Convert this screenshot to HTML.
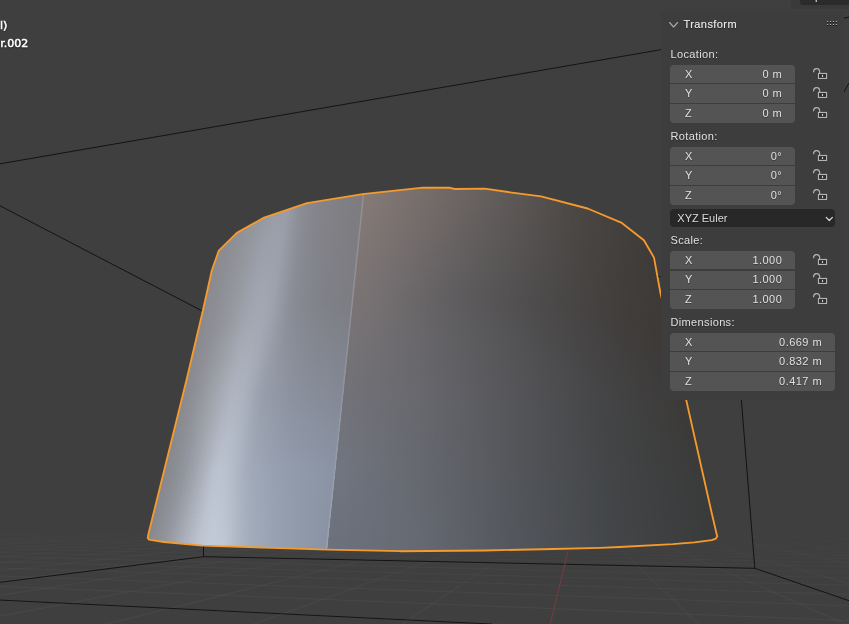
<!DOCTYPE html><html><head><meta charset="utf-8"><title>Blender</title><style>
html,body{margin:0;padding:0;background:#3f3f3f;}
body{width:849px;height:624px;overflow:hidden;position:relative;font-family:"Liberation Sans",sans-serif;font-size:11px;color:#e0e0e0;letter-spacing:0.35px;}
.abs{position:absolute;}
#panel{left:661px;top:10.8px;width:182.6px;height:388.9px;background:#3d3d3d;border-radius:4px;}
.lbl{position:absolute;white-space:nowrap;line-height:12px;text-shadow:0 1px 1px rgba(0,0,0,.35);}
.fld{position:absolute;background:#545454;left:670px;}
.val{position:absolute;white-space:nowrap;line-height:12px;text-align:right;}
#ov{position:absolute;left:0;top:0;white-space:nowrap;font-weight:bold;color:#fff;text-shadow:0 0 2px #000,0 1px 2px #000;}
</style></head><body>
<svg width="849" height="624" viewBox="0 0 849 624" style="position:absolute;left:0;top:0">
<rect width="849" height="624" fill="#3f3f3f"/>
<defs><linearGradient id="gfade" gradientUnits="userSpaceOnUse" x1="0" y1="524" x2="0" y2="600"><stop offset="0" stop-color="#fff" stop-opacity="0"/><stop offset="1" stop-color="#fff" stop-opacity="0.043"/></linearGradient></defs>
<g fill="none" stroke-width="1">
<path d="M578.0,507.5L-1941.9,647.3" stroke="url(#gfade)"/>
<path d="M578.0,507.5L-1764.3,647.3" stroke="url(#gfade)"/>
<path d="M578.0,507.5L-1586.7,647.3" stroke="url(#gfade)"/>
<path d="M578.0,507.5L-1409.1,647.3" stroke="url(#gfade)"/>
<path d="M578.0,507.5L-1231.5,647.3" stroke="url(#gfade)"/>
<path d="M578.0,507.5L-1053.9,647.3" stroke="url(#gfade)"/>
<path d="M578.0,507.5L-876.3,647.3" stroke="url(#gfade)"/>
<path d="M578.0,507.5L-698.7,647.3" stroke="url(#gfade)"/>
<path d="M578.0,507.5L-521.1,647.3" stroke="url(#gfade)"/>
<path d="M578.0,507.5L-343.5,647.3" stroke="url(#gfade)"/>
<path d="M578.0,507.5L-165.9,647.3" stroke="url(#gfade)"/>
<path d="M578.0,507.5L11.7,647.3" stroke="url(#gfade)"/>
<path d="M578.0,507.5L189.3,647.3" stroke="url(#gfade)"/>
<path d="M578.0,507.5L366.9,647.3" stroke="url(#gfade)"/>
<path d="M578.0,507.5L722.1,647.3" stroke="url(#gfade)"/>
<path d="M578.0,507.5L899.7,647.3" stroke="url(#gfade)"/>
<path d="M578.0,507.5L1077.3,647.3" stroke="url(#gfade)"/>
<path d="M578.0,507.5L1254.9,647.3" stroke="url(#gfade)"/>
<path d="M578.0,507.5L1432.5,647.3" stroke="url(#gfade)"/>
<path d="M578.0,507.5L1610.1,647.3" stroke="url(#gfade)"/>
<path d="M578.0,507.5L1787.7,647.3" stroke="url(#gfade)"/>
<path d="M578.0,507.5L1965.3,647.3" stroke="url(#gfade)"/>
<path d="M578.0,507.5L2142.9,647.3" stroke="url(#gfade)"/>
<path d="M578.0,507.5L2320.5,647.3" stroke="url(#gfade)"/>
<path d="M578.0,507.5L2498.1,647.3" stroke="url(#gfade)"/>
<path d="M578.0,507.5L2675.7,647.3" stroke="url(#gfade)"/>
<path d="M578.0,507.5L2853.3,647.3" stroke="url(#gfade)"/>
<path d="M578.0,507.5L3030.9,647.3" stroke="url(#gfade)"/>
<path d="M0,600.4L849,640.8" stroke="#fff" stroke-opacity="0.043"/>
<path d="M0,586.3L849,620.6" stroke="#fff" stroke-opacity="0.043"/>
<path d="M0,576.0L849,605.8" stroke="#fff" stroke-opacity="0.040"/>
<path d="M0,568.0L849,594.4" stroke="#fff" stroke-opacity="0.035"/>
<path d="M0,561.7L849,585.3" stroke="#fff" stroke-opacity="0.030"/>
<path d="M0,556.6L849,578.0" stroke="#fff" stroke-opacity="0.026"/>
<path d="M0,552.4L849,571.9" stroke="#fff" stroke-opacity="0.023"/>
<path d="M0,548.8L849,566.8" stroke="#fff" stroke-opacity="0.021"/>
<path d="M0,545.8L849,562.4" stroke="#fff" stroke-opacity="0.019"/>
<path d="M0,543.2L849,558.7" stroke="#fff" stroke-opacity="0.017"/>
<path d="M0,540.9L849,555.4" stroke="#fff" stroke-opacity="0.015"/>
<path d="M0,538.9L849,552.5" stroke="#fff" stroke-opacity="0.014"/>
<path d="M0,537.1L849,550.0" stroke="#fff" stroke-opacity="0.012"/>
<path d="M0,535.5L849,547.7" stroke="#fff" stroke-opacity="0.011"/>
<path d="M0,534.1L849,545.6" stroke="#fff" stroke-opacity="0.010"/>
<path d="M0,532.8L849,543.8" stroke="#fff" stroke-opacity="0.009"/>
<path d="M0,531.6L849,542.1" stroke="#fff" stroke-opacity="0.008"/>
</g>
<g stroke="#0e0e0e" stroke-width="0.9" fill="none">
<path d="M0,163.8 L849,17.2"/>
<path d="M0,205.8 L210,315"/>
<path d="M0,582.3 L203.5,556.7 L754.8,568.3 L849,600.7"/>
<path d="M203.5,545 L203.5,556.7"/>
<path d="M0,600.1 L492,624.05"/>
<path d="M741.2,398 L754.8,568.3"/>
<path d="M843,93.5 L849,83"/>
<path d="M656.5,275.6 L660.5,276.8"/>
</g>
<path d="M568,551 L550.3,624" stroke="#7a3a40" stroke-width="1" fill="none"/>
<defs>
<linearGradient id="L0" gradientUnits="userSpaceOnUse" x1="219.8" y1="249.6" x2="148.5" y2="539.2"><stop offset="0" stop-color="#8b8b91"/><stop offset="0.3" stop-color="#8a8a90"/><stop offset="0.55" stop-color="#898a90"/><stop offset="0.78" stop-color="#86888e"/><stop offset="1" stop-color="#87898f"/></linearGradient>
<linearGradient id="L1" gradientUnits="userSpaceOnUse" x1="221.4" y1="248.0" x2="150.5" y2="539.5"><stop offset="0" stop-color="#8b8b91"/><stop offset="0.3" stop-color="#8a8a90"/><stop offset="0.55" stop-color="#8a8b91"/><stop offset="0.78" stop-color="#87898f"/><stop offset="1" stop-color="#888a90"/></linearGradient>
<linearGradient id="L2" gradientUnits="userSpaceOnUse" x1="223.0" y1="246.5" x2="152.5" y2="539.9"><stop offset="0" stop-color="#8b8b91"/><stop offset="0.3" stop-color="#8a8b91"/><stop offset="0.55" stop-color="#8a8c92"/><stop offset="0.78" stop-color="#878a90"/><stop offset="1" stop-color="#898b91"/></linearGradient>
<linearGradient id="L3" gradientUnits="userSpaceOnUse" x1="224.6" y1="244.9" x2="154.5" y2="540.3"><stop offset="0" stop-color="#8c8c92"/><stop offset="0.3" stop-color="#8b8b91"/><stop offset="0.55" stop-color="#8b8d93"/><stop offset="0.78" stop-color="#888b91"/><stop offset="1" stop-color="#8b8d93"/></linearGradient>
<linearGradient id="L4" gradientUnits="userSpaceOnUse" x1="226.2" y1="243.3" x2="156.4" y2="540.6"><stop offset="0" stop-color="#8c8d93"/><stop offset="0.3" stop-color="#8c8c92"/><stop offset="0.55" stop-color="#8c8e94"/><stop offset="0.78" stop-color="#8a8c92"/><stop offset="1" stop-color="#8c8e94"/></linearGradient>
<linearGradient id="L5" gradientUnits="userSpaceOnUse" x1="227.8" y1="241.7" x2="158.4" y2="541.0"><stop offset="0" stop-color="#8c8d93"/><stop offset="0.3" stop-color="#8c8d93"/><stop offset="0.55" stop-color="#8e8f95"/><stop offset="0.78" stop-color="#8b8d94"/><stop offset="1" stop-color="#8e9096"/></linearGradient>
<linearGradient id="L6" gradientUnits="userSpaceOnUse" x1="229.4" y1="240.1" x2="160.4" y2="541.4"><stop offset="0" stop-color="#8d8e94"/><stop offset="0.3" stop-color="#8d8e94"/><stop offset="0.55" stop-color="#8f9097"/><stop offset="0.78" stop-color="#8c8f95"/><stop offset="1" stop-color="#8f9198"/></linearGradient>
<linearGradient id="L7" gradientUnits="userSpaceOnUse" x1="231.0" y1="238.6" x2="162.4" y2="541.7"><stop offset="0" stop-color="#8d8e94"/><stop offset="0.3" stop-color="#8d8e95"/><stop offset="0.55" stop-color="#909298"/><stop offset="0.78" stop-color="#8e9097"/><stop offset="1" stop-color="#91939a"/></linearGradient>
<linearGradient id="L8" gradientUnits="userSpaceOnUse" x1="232.6" y1="237.0" x2="164.4" y2="542.1"><stop offset="0" stop-color="#8e8f95"/><stop offset="0.3" stop-color="#8e8f95"/><stop offset="0.55" stop-color="#91939a"/><stop offset="0.78" stop-color="#8f9299"/><stop offset="1" stop-color="#93959c"/></linearGradient>
<linearGradient id="L9" gradientUnits="userSpaceOnUse" x1="234.3" y1="235.4" x2="166.4" y2="542.3"><stop offset="0" stop-color="#8e8f95"/><stop offset="0.3" stop-color="#8f9096"/><stop offset="0.55" stop-color="#93959c"/><stop offset="0.78" stop-color="#91949c"/><stop offset="1" stop-color="#95979f"/></linearGradient>
<linearGradient id="L10" gradientUnits="userSpaceOnUse" x1="235.9" y1="233.8" x2="168.4" y2="542.5"><stop offset="0" stop-color="#8f9096"/><stop offset="0.3" stop-color="#909197"/><stop offset="0.55" stop-color="#94979d"/><stop offset="0.78" stop-color="#93959e"/><stop offset="1" stop-color="#979aa2"/></linearGradient>
<linearGradient id="L11" gradientUnits="userSpaceOnUse" x1="237.5" y1="232.5" x2="170.4" y2="542.6"><stop offset="0" stop-color="#8f9097"/><stop offset="0.3" stop-color="#919298"/><stop offset="0.55" stop-color="#96989f"/><stop offset="0.78" stop-color="#9497a0"/><stop offset="1" stop-color="#999ca4"/></linearGradient>
<linearGradient id="L12" gradientUnits="userSpaceOnUse" x1="239.1" y1="231.6" x2="172.4" y2="542.8"><stop offset="0" stop-color="#909197"/><stop offset="0.3" stop-color="#919399"/><stop offset="0.55" stop-color="#979aa1"/><stop offset="0.78" stop-color="#969aa3"/><stop offset="1" stop-color="#9c9fa7"/></linearGradient>
<linearGradient id="L13" gradientUnits="userSpaceOnUse" x1="240.7" y1="230.7" x2="174.3" y2="543.0"><stop offset="0" stop-color="#909198"/><stop offset="0.3" stop-color="#92949a"/><stop offset="0.55" stop-color="#999ca3"/><stop offset="0.78" stop-color="#989ca5"/><stop offset="1" stop-color="#9ea2ab"/></linearGradient>
<linearGradient id="L14" gradientUnits="userSpaceOnUse" x1="242.3" y1="229.8" x2="176.3" y2="543.2"><stop offset="0" stop-color="#909299"/><stop offset="0.3" stop-color="#93959b"/><stop offset="0.55" stop-color="#9a9ea5"/><stop offset="0.78" stop-color="#9b9fa8"/><stop offset="1" stop-color="#a1a5ae"/></linearGradient>
<linearGradient id="L15" gradientUnits="userSpaceOnUse" x1="243.9" y1="228.9" x2="178.3" y2="543.4"><stop offset="0" stop-color="#919299"/><stop offset="0.3" stop-color="#94969d"/><stop offset="0.55" stop-color="#9ca0a7"/><stop offset="0.78" stop-color="#9da1ab"/><stop offset="1" stop-color="#a4a8b1"/></linearGradient>
<linearGradient id="L16" gradientUnits="userSpaceOnUse" x1="245.5" y1="228.0" x2="180.3" y2="543.6"><stop offset="0" stop-color="#91939a"/><stop offset="0.3" stop-color="#95979e"/><stop offset="0.55" stop-color="#9ea1aa"/><stop offset="0.78" stop-color="#9fa4ae"/><stop offset="1" stop-color="#a6abb5"/></linearGradient>
<linearGradient id="L17" gradientUnits="userSpaceOnUse" x1="247.1" y1="227.1" x2="182.3" y2="543.8"><stop offset="0" stop-color="#92939b"/><stop offset="0.3" stop-color="#96989f"/><stop offset="0.55" stop-color="#9fa3ac"/><stop offset="0.78" stop-color="#a2a7b0"/><stop offset="1" stop-color="#a9aeb8"/></linearGradient>
<linearGradient id="L18" gradientUnits="userSpaceOnUse" x1="248.7" y1="226.2" x2="184.3" y2="544.0"><stop offset="0" stop-color="#92949b"/><stop offset="0.3" stop-color="#9799a0"/><stop offset="0.55" stop-color="#a1a5ae"/><stop offset="0.78" stop-color="#a5aab4"/><stop offset="1" stop-color="#acb1bb"/></linearGradient>
<linearGradient id="L19" gradientUnits="userSpaceOnUse" x1="250.3" y1="225.3" x2="186.3" y2="544.2"><stop offset="0" stop-color="#93949c"/><stop offset="0.3" stop-color="#989aa1"/><stop offset="0.55" stop-color="#a2a7b0"/><stop offset="0.78" stop-color="#a7adb7"/><stop offset="1" stop-color="#aeb4be"/></linearGradient>
<linearGradient id="L20" gradientUnits="userSpaceOnUse" x1="251.9" y1="224.4" x2="188.3" y2="544.4"><stop offset="0" stop-color="#93959d"/><stop offset="0.3" stop-color="#999ba3"/><stop offset="0.55" stop-color="#a4a9b2"/><stop offset="0.78" stop-color="#aab0ba"/><stop offset="1" stop-color="#b1b7c2"/></linearGradient>
<linearGradient id="L21" gradientUnits="userSpaceOnUse" x1="253.5" y1="223.5" x2="190.3" y2="544.6"><stop offset="0" stop-color="#94969d"/><stop offset="0.3" stop-color="#9a9ca4"/><stop offset="0.55" stop-color="#a5aab4"/><stop offset="0.78" stop-color="#adb3be"/><stop offset="1" stop-color="#b3bac5"/></linearGradient>
<linearGradient id="L22" gradientUnits="userSpaceOnUse" x1="255.1" y1="222.6" x2="192.2" y2="544.8"><stop offset="0" stop-color="#94969e"/><stop offset="0.3" stop-color="#9b9da6"/><stop offset="0.55" stop-color="#a7acb6"/><stop offset="0.78" stop-color="#b0b6c1"/><stop offset="1" stop-color="#b6bdc8"/></linearGradient>
<linearGradient id="L23" gradientUnits="userSpaceOnUse" x1="256.7" y1="221.7" x2="194.2" y2="544.9"><stop offset="0" stop-color="#95979f"/><stop offset="0.3" stop-color="#9c9fa7"/><stop offset="0.55" stop-color="#a8aeb8"/><stop offset="0.78" stop-color="#b2b9c5"/><stop offset="1" stop-color="#b8bfcb"/></linearGradient>
<linearGradient id="L24" gradientUnits="userSpaceOnUse" x1="258.3" y1="220.8" x2="196.2" y2="545.1"><stop offset="0" stop-color="#9597a0"/><stop offset="0.3" stop-color="#9da0a9"/><stop offset="0.55" stop-color="#aaafba"/><stop offset="0.78" stop-color="#b5bcc8"/><stop offset="1" stop-color="#bac2ce"/></linearGradient>
<linearGradient id="L25" gradientUnits="userSpaceOnUse" x1="259.9" y1="219.9" x2="198.2" y2="545.3"><stop offset="0" stop-color="#9698a1"/><stop offset="0.3" stop-color="#9da1aa"/><stop offset="0.55" stop-color="#abb1bc"/><stop offset="0.78" stop-color="#b7bfcb"/><stop offset="1" stop-color="#bcc4d0"/></linearGradient>
<linearGradient id="L26" gradientUnits="userSpaceOnUse" x1="261.5" y1="219.0" x2="200.2" y2="545.5"><stop offset="0" stop-color="#9699a2"/><stop offset="0.3" stop-color="#9ea2ac"/><stop offset="0.55" stop-color="#acb2bd"/><stop offset="0.78" stop-color="#b9c1cd"/><stop offset="1" stop-color="#bdc6d1"/></linearGradient>
<linearGradient id="L27" gradientUnits="userSpaceOnUse" x1="263.2" y1="218.1" x2="202.2" y2="545.7"><stop offset="0" stop-color="#9799a3"/><stop offset="0.3" stop-color="#9fa3ad"/><stop offset="0.55" stop-color="#adb3bf"/><stop offset="0.78" stop-color="#bac2cf"/><stop offset="1" stop-color="#bfc7d3"/></linearGradient>
<linearGradient id="L28" gradientUnits="userSpaceOnUse" x1="264.8" y1="217.3" x2="204.2" y2="545.8"><stop offset="0" stop-color="#979aa4"/><stop offset="0.3" stop-color="#a0a4ae"/><stop offset="0.55" stop-color="#aeb4c0"/><stop offset="0.78" stop-color="#bac3d0"/><stop offset="1" stop-color="#c0c8d4"/></linearGradient>
<linearGradient id="L29" gradientUnits="userSpaceOnUse" x1="266.4" y1="216.8" x2="206.2" y2="545.8"><stop offset="0" stop-color="#989ba4"/><stop offset="0.3" stop-color="#a0a5af"/><stop offset="0.55" stop-color="#aeb5c1"/><stop offset="0.78" stop-color="#bbc3d0"/><stop offset="1" stop-color="#c1c9d5"/></linearGradient>
<linearGradient id="L30" gradientUnits="userSpaceOnUse" x1="268.0" y1="216.3" x2="208.2" y2="545.9"><stop offset="0" stop-color="#989ba5"/><stop offset="0.3" stop-color="#a1a5af"/><stop offset="0.55" stop-color="#aeb5c1"/><stop offset="0.78" stop-color="#bac3d0"/><stop offset="1" stop-color="#c1cad6"/></linearGradient>
<linearGradient id="L31" gradientUnits="userSpaceOnUse" x1="269.6" y1="215.7" x2="210.2" y2="545.9"><stop offset="0" stop-color="#999ca6"/><stop offset="0.3" stop-color="#a1a6b0"/><stop offset="0.55" stop-color="#aeb5c1"/><stop offset="0.78" stop-color="#bac2cf"/><stop offset="1" stop-color="#c2cad6"/></linearGradient>
<linearGradient id="L32" gradientUnits="userSpaceOnUse" x1="271.2" y1="215.2" x2="212.1" y2="546.0"><stop offset="0" stop-color="#999ca7"/><stop offset="0.3" stop-color="#a2a6b1"/><stop offset="0.55" stop-color="#adb4c0"/><stop offset="0.78" stop-color="#b9c1ce"/><stop offset="1" stop-color="#c2cbd7"/></linearGradient>
<linearGradient id="L33" gradientUnits="userSpaceOnUse" x1="272.8" y1="214.7" x2="214.1" y2="546.1"><stop offset="0" stop-color="#9a9da7"/><stop offset="0.3" stop-color="#a2a7b1"/><stop offset="0.55" stop-color="#adb4c0"/><stop offset="0.78" stop-color="#b7c0cd"/><stop offset="1" stop-color="#c2cad6"/></linearGradient>
<linearGradient id="L34" gradientUnits="userSpaceOnUse" x1="274.4" y1="214.1" x2="216.1" y2="546.1"><stop offset="0" stop-color="#9a9da8"/><stop offset="0.3" stop-color="#a2a7b2"/><stop offset="0.55" stop-color="#acb3bf"/><stop offset="0.78" stop-color="#b6becb"/><stop offset="1" stop-color="#c1cad6"/></linearGradient>
<linearGradient id="L35" gradientUnits="userSpaceOnUse" x1="276.0" y1="213.6" x2="218.1" y2="546.2"><stop offset="0" stop-color="#9a9da8"/><stop offset="0.3" stop-color="#a2a7b2"/><stop offset="0.55" stop-color="#abb1be"/><stop offset="0.78" stop-color="#b4bdca"/><stop offset="1" stop-color="#c1cad6"/></linearGradient>
<linearGradient id="L36" gradientUnits="userSpaceOnUse" x1="277.6" y1="213.0" x2="220.1" y2="546.2"><stop offset="0" stop-color="#9a9da8"/><stop offset="0.3" stop-color="#a2a7b2"/><stop offset="0.55" stop-color="#a9b0bc"/><stop offset="0.78" stop-color="#b2bbc8"/><stop offset="1" stop-color="#c0c9d5"/></linearGradient>
<linearGradient id="L37" gradientUnits="userSpaceOnUse" x1="279.2" y1="212.5" x2="222.1" y2="546.3"><stop offset="0" stop-color="#9a9da8"/><stop offset="0.3" stop-color="#a2a7b2"/><stop offset="0.55" stop-color="#a7aeba"/><stop offset="0.78" stop-color="#b1b9c6"/><stop offset="1" stop-color="#bfc8d4"/></linearGradient>
<linearGradient id="L38" gradientUnits="userSpaceOnUse" x1="280.8" y1="212.0" x2="224.1" y2="546.4"><stop offset="0" stop-color="#9a9da8"/><stop offset="0.3" stop-color="#a2a7b2"/><stop offset="0.55" stop-color="#a6acb9"/><stop offset="0.78" stop-color="#afb7c5"/><stop offset="1" stop-color="#bec7d3"/></linearGradient>
<linearGradient id="L39" gradientUnits="userSpaceOnUse" x1="282.4" y1="211.4" x2="226.1" y2="546.4"><stop offset="0" stop-color="#9a9da8"/><stop offset="0.3" stop-color="#a1a6b1"/><stop offset="0.55" stop-color="#a4aab7"/><stop offset="0.78" stop-color="#adb5c3"/><stop offset="1" stop-color="#bcc5d1"/></linearGradient>
<linearGradient id="L40" gradientUnits="userSpaceOnUse" x1="284.0" y1="210.9" x2="228.1" y2="546.5"><stop offset="0" stop-color="#9a9da8"/><stop offset="0.3" stop-color="#a0a5b0"/><stop offset="0.55" stop-color="#a2a8b5"/><stop offset="0.78" stop-color="#abb3c1"/><stop offset="1" stop-color="#bac3cf"/></linearGradient>
<linearGradient id="L41" gradientUnits="userSpaceOnUse" x1="285.6" y1="210.4" x2="230.0" y2="546.5"><stop offset="0" stop-color="#9a9da8"/><stop offset="0.3" stop-color="#a0a4af"/><stop offset="0.55" stop-color="#9fa6b2"/><stop offset="0.78" stop-color="#a8b1bf"/><stop offset="1" stop-color="#b8c1cd"/></linearGradient>
<linearGradient id="L42" gradientUnits="userSpaceOnUse" x1="287.2" y1="209.8" x2="232.0" y2="546.6"><stop offset="0" stop-color="#999ca7"/><stop offset="0.3" stop-color="#9ea3ae"/><stop offset="0.55" stop-color="#9da4b0"/><stop offset="0.78" stop-color="#a6afbe"/><stop offset="1" stop-color="#b5becb"/></linearGradient>
<linearGradient id="L43" gradientUnits="userSpaceOnUse" x1="288.8" y1="209.3" x2="234.0" y2="546.7"><stop offset="0" stop-color="#989ba5"/><stop offset="0.3" stop-color="#9da2ad"/><stop offset="0.55" stop-color="#9ca2af"/><stop offset="0.78" stop-color="#a5adbc"/><stop offset="1" stop-color="#b3bcc9"/></linearGradient>
<linearGradient id="L44" gradientUnits="userSpaceOnUse" x1="290.4" y1="208.7" x2="236.0" y2="546.7"><stop offset="0" stop-color="#9699a3"/><stop offset="0.3" stop-color="#9ba0ab"/><stop offset="0.55" stop-color="#9aa0ad"/><stop offset="0.78" stop-color="#a3acbb"/><stop offset="1" stop-color="#b0b9c7"/></linearGradient>
<linearGradient id="L45" gradientUnits="userSpaceOnUse" x1="292.1" y1="208.2" x2="238.0" y2="546.8"><stop offset="0" stop-color="#9597a1"/><stop offset="0.3" stop-color="#9a9ea9"/><stop offset="0.55" stop-color="#989fab"/><stop offset="0.78" stop-color="#a2aab9"/><stop offset="1" stop-color="#aeb7c4"/></linearGradient>
<linearGradient id="L46" gradientUnits="userSpaceOnUse" x1="293.7" y1="207.7" x2="240.0" y2="546.9"><stop offset="0" stop-color="#93959f"/><stop offset="0.3" stop-color="#989ca7"/><stop offset="0.55" stop-color="#979daa"/><stop offset="0.78" stop-color="#a0a9b8"/><stop offset="1" stop-color="#acb5c2"/></linearGradient>
<linearGradient id="L47" gradientUnits="userSpaceOnUse" x1="295.3" y1="207.1" x2="242.0" y2="546.9"><stop offset="0" stop-color="#91939d"/><stop offset="0.3" stop-color="#969aa4"/><stop offset="0.55" stop-color="#969ca9"/><stop offset="0.78" stop-color="#9fa8b8"/><stop offset="1" stop-color="#a9b2c0"/></linearGradient>
<linearGradient id="L48" gradientUnits="userSpaceOnUse" x1="296.9" y1="206.6" x2="244.0" y2="547.0"><stop offset="0" stop-color="#8f919b"/><stop offset="0.3" stop-color="#9498a2"/><stop offset="0.55" stop-color="#959ba8"/><stop offset="0.78" stop-color="#9fa8b7"/><stop offset="1" stop-color="#a8b1bf"/></linearGradient>
<linearGradient id="L49" gradientUnits="userSpaceOnUse" x1="298.5" y1="206.1" x2="245.9" y2="547.0"><stop offset="0" stop-color="#8d9099"/><stop offset="0.3" stop-color="#9296a0"/><stop offset="0.55" stop-color="#959ba8"/><stop offset="0.78" stop-color="#9ea7b6"/><stop offset="1" stop-color="#a6afbd"/></linearGradient>
<linearGradient id="L50" gradientUnits="userSpaceOnUse" x1="300.1" y1="205.5" x2="247.9" y2="547.1"><stop offset="0" stop-color="#8c8e97"/><stop offset="0.3" stop-color="#90949e"/><stop offset="0.55" stop-color="#949aa7"/><stop offset="0.78" stop-color="#9da6b6"/><stop offset="1" stop-color="#a4aebc"/></linearGradient>
<linearGradient id="L51" gradientUnits="userSpaceOnUse" x1="301.7" y1="205.0" x2="249.9" y2="547.2"><stop offset="0" stop-color="#8b8d95"/><stop offset="0.3" stop-color="#8e929c"/><stop offset="0.55" stop-color="#9399a6"/><stop offset="0.78" stop-color="#9ca5b5"/><stop offset="1" stop-color="#a3acbb"/></linearGradient>
<linearGradient id="L52" gradientUnits="userSpaceOnUse" x1="303.3" y1="204.4" x2="251.9" y2="547.2"><stop offset="0" stop-color="#8a8c94"/><stop offset="0.3" stop-color="#8c909a"/><stop offset="0.55" stop-color="#9298a5"/><stop offset="0.78" stop-color="#9ca5b4"/><stop offset="1" stop-color="#a2abba"/></linearGradient>
<linearGradient id="L53" gradientUnits="userSpaceOnUse" x1="304.9" y1="203.9" x2="253.9" y2="547.3"><stop offset="0" stop-color="#898b93"/><stop offset="0.3" stop-color="#8b8e98"/><stop offset="0.55" stop-color="#9197a4"/><stop offset="0.78" stop-color="#9ba4b4"/><stop offset="1" stop-color="#a1aab9"/></linearGradient>
<linearGradient id="L54" gradientUnits="userSpaceOnUse" x1="306.5" y1="203.4" x2="255.9" y2="547.3"><stop offset="0" stop-color="#888a92"/><stop offset="0.3" stop-color="#8a8d97"/><stop offset="0.55" stop-color="#9197a4"/><stop offset="0.78" stop-color="#9aa3b3"/><stop offset="1" stop-color="#a0aab8"/></linearGradient>
<linearGradient id="L55" gradientUnits="userSpaceOnUse" x1="308.1" y1="203.0" x2="257.9" y2="547.4"><stop offset="0" stop-color="#888991"/><stop offset="0.3" stop-color="#898c95"/><stop offset="0.55" stop-color="#9096a3"/><stop offset="0.78" stop-color="#99a2b3"/><stop offset="1" stop-color="#9fa9b7"/></linearGradient>
<linearGradient id="L56" gradientUnits="userSpaceOnUse" x1="309.7" y1="202.8" x2="259.9" y2="547.5"><stop offset="0" stop-color="#878890"/><stop offset="0.3" stop-color="#888b94"/><stop offset="0.55" stop-color="#8f95a2"/><stop offset="0.78" stop-color="#99a2b2"/><stop offset="1" stop-color="#9ea8b7"/></linearGradient>
<linearGradient id="L57" gradientUnits="userSpaceOnUse" x1="311.3" y1="202.5" x2="261.9" y2="547.5"><stop offset="0" stop-color="#86878f"/><stop offset="0.3" stop-color="#878a93"/><stop offset="0.55" stop-color="#8e94a1"/><stop offset="0.78" stop-color="#98a1b1"/><stop offset="1" stop-color="#9da7b6"/></linearGradient>
<linearGradient id="L58" gradientUnits="userSpaceOnUse" x1="312.9" y1="202.2" x2="263.9" y2="547.6"><stop offset="0" stop-color="#86878e"/><stop offset="0.3" stop-color="#878993"/><stop offset="0.55" stop-color="#8e94a1"/><stop offset="0.78" stop-color="#97a0b1"/><stop offset="1" stop-color="#9ca6b5"/></linearGradient>
<linearGradient id="L59" gradientUnits="userSpaceOnUse" x1="314.5" y1="202.0" x2="265.8" y2="547.6"><stop offset="0" stop-color="#85868d"/><stop offset="0.3" stop-color="#868992"/><stop offset="0.55" stop-color="#8d93a0"/><stop offset="0.78" stop-color="#97a0b0"/><stop offset="1" stop-color="#9ba5b4"/></linearGradient>
<linearGradient id="L60" gradientUnits="userSpaceOnUse" x1="316.1" y1="201.7" x2="267.8" y2="547.7"><stop offset="0" stop-color="#85858c"/><stop offset="0.3" stop-color="#868891"/><stop offset="0.55" stop-color="#8c929f"/><stop offset="0.78" stop-color="#969fb0"/><stop offset="1" stop-color="#9aa4b3"/></linearGradient>
<linearGradient id="L61" gradientUnits="userSpaceOnUse" x1="317.7" y1="201.5" x2="269.8" y2="547.8"><stop offset="0" stop-color="#84848b"/><stop offset="0.3" stop-color="#858790"/><stop offset="0.55" stop-color="#8b919e"/><stop offset="0.78" stop-color="#959eaf"/><stop offset="1" stop-color="#99a3b3"/></linearGradient>
<linearGradient id="L62" gradientUnits="userSpaceOnUse" x1="319.3" y1="201.2" x2="271.8" y2="547.8"><stop offset="0" stop-color="#84848a"/><stop offset="0.3" stop-color="#85878f"/><stop offset="0.55" stop-color="#8b919e"/><stop offset="0.78" stop-color="#959eae"/><stop offset="1" stop-color="#98a2b2"/></linearGradient>
<linearGradient id="L63" gradientUnits="userSpaceOnUse" x1="321.0" y1="201.0" x2="273.8" y2="547.9"><stop offset="0" stop-color="#838389"/><stop offset="0.3" stop-color="#84868f"/><stop offset="0.55" stop-color="#8a909d"/><stop offset="0.78" stop-color="#949dae"/><stop offset="1" stop-color="#97a1b1"/></linearGradient>
<linearGradient id="L64" gradientUnits="userSpaceOnUse" x1="322.6" y1="200.7" x2="275.8" y2="548.0"><stop offset="0" stop-color="#838389"/><stop offset="0.3" stop-color="#84868e"/><stop offset="0.55" stop-color="#8a909d"/><stop offset="0.78" stop-color="#949dae"/><stop offset="1" stop-color="#97a1b0"/></linearGradient>
<linearGradient id="L65" gradientUnits="userSpaceOnUse" x1="324.2" y1="200.4" x2="277.8" y2="548.0"><stop offset="0" stop-color="#838288"/><stop offset="0.3" stop-color="#83858d"/><stop offset="0.55" stop-color="#898f9c"/><stop offset="0.78" stop-color="#939cad"/><stop offset="1" stop-color="#96a0b0"/></linearGradient>
<linearGradient id="L66" gradientUnits="userSpaceOnUse" x1="325.8" y1="200.2" x2="279.8" y2="548.1"><stop offset="0" stop-color="#828288"/><stop offset="0.3" stop-color="#83848c"/><stop offset="0.55" stop-color="#898f9c"/><stop offset="0.78" stop-color="#939cad"/><stop offset="1" stop-color="#959faf"/></linearGradient>
<linearGradient id="L67" gradientUnits="userSpaceOnUse" x1="327.4" y1="199.9" x2="281.8" y2="548.1"><stop offset="0" stop-color="#828287"/><stop offset="0.3" stop-color="#82848c"/><stop offset="0.55" stop-color="#898f9b"/><stop offset="0.78" stop-color="#929bac"/><stop offset="1" stop-color="#959faf"/></linearGradient>
<linearGradient id="L68" gradientUnits="userSpaceOnUse" x1="329.0" y1="199.7" x2="283.7" y2="548.2"><stop offset="0" stop-color="#828187"/><stop offset="0.3" stop-color="#82838b"/><stop offset="0.55" stop-color="#888e9b"/><stop offset="0.78" stop-color="#929bac"/><stop offset="1" stop-color="#949eae"/></linearGradient>
<linearGradient id="L69" gradientUnits="userSpaceOnUse" x1="330.6" y1="199.4" x2="285.7" y2="548.3"><stop offset="0" stop-color="#828186"/><stop offset="0.3" stop-color="#81838a"/><stop offset="0.55" stop-color="#888e9b"/><stop offset="0.78" stop-color="#929bac"/><stop offset="1" stop-color="#949eae"/></linearGradient>
<linearGradient id="L70" gradientUnits="userSpaceOnUse" x1="332.2" y1="199.1" x2="287.7" y2="548.3"><stop offset="0" stop-color="#828186"/><stop offset="0.3" stop-color="#818289"/><stop offset="0.55" stop-color="#888e9a"/><stop offset="0.78" stop-color="#919aab"/><stop offset="1" stop-color="#939dad"/></linearGradient>
<linearGradient id="L71" gradientUnits="userSpaceOnUse" x1="333.8" y1="198.9" x2="289.7" y2="548.4"><stop offset="0" stop-color="#818086"/><stop offset="0.3" stop-color="#808289"/><stop offset="0.55" stop-color="#878d9a"/><stop offset="0.78" stop-color="#919aab"/><stop offset="1" stop-color="#939dad"/></linearGradient>
<linearGradient id="L72" gradientUnits="userSpaceOnUse" x1="335.4" y1="198.6" x2="291.7" y2="548.5"><stop offset="0" stop-color="#818085"/><stop offset="0.3" stop-color="#808188"/><stop offset="0.55" stop-color="#878d99"/><stop offset="0.78" stop-color="#9099aa"/><stop offset="1" stop-color="#929cac"/></linearGradient>
<linearGradient id="L73" gradientUnits="userSpaceOnUse" x1="337.0" y1="198.4" x2="293.7" y2="548.5"><stop offset="0" stop-color="#818085"/><stop offset="0.3" stop-color="#808188"/><stop offset="0.55" stop-color="#878d99"/><stop offset="0.78" stop-color="#9099aa"/><stop offset="1" stop-color="#929cac"/></linearGradient>
<linearGradient id="L74" gradientUnits="userSpaceOnUse" x1="338.6" y1="198.1" x2="295.7" y2="548.6"><stop offset="0" stop-color="#818084"/><stop offset="0.3" stop-color="#7f8087"/><stop offset="0.55" stop-color="#878c99"/><stop offset="0.78" stop-color="#9099aa"/><stop offset="1" stop-color="#919bab"/></linearGradient>
<linearGradient id="L75" gradientUnits="userSpaceOnUse" x1="340.2" y1="197.8" x2="297.7" y2="548.7"><stop offset="0" stop-color="#817f84"/><stop offset="0.3" stop-color="#7f8087"/><stop offset="0.55" stop-color="#868c98"/><stop offset="0.78" stop-color="#8f98a9"/><stop offset="1" stop-color="#919aab"/></linearGradient>
<linearGradient id="L76" gradientUnits="userSpaceOnUse" x1="341.8" y1="197.6" x2="299.6" y2="548.7"><stop offset="0" stop-color="#807f83"/><stop offset="0.3" stop-color="#7f8087"/><stop offset="0.55" stop-color="#868b98"/><stop offset="0.78" stop-color="#8f98a9"/><stop offset="1" stop-color="#909aaa"/></linearGradient>
<linearGradient id="L77" gradientUnits="userSpaceOnUse" x1="343.4" y1="197.3" x2="301.6" y2="548.8"><stop offset="0" stop-color="#807f83"/><stop offset="0.3" stop-color="#7f7f86"/><stop offset="0.55" stop-color="#868b98"/><stop offset="0.78" stop-color="#8f98a9"/><stop offset="1" stop-color="#9099aa"/></linearGradient>
<linearGradient id="L78" gradientUnits="userSpaceOnUse" x1="345.0" y1="197.1" x2="303.6" y2="548.9"><stop offset="0" stop-color="#807e83"/><stop offset="0.3" stop-color="#7f7f86"/><stop offset="0.55" stop-color="#858b97"/><stop offset="0.78" stop-color="#8e97a8"/><stop offset="1" stop-color="#8f99a9"/></linearGradient>
<linearGradient id="L79" gradientUnits="userSpaceOnUse" x1="346.6" y1="196.8" x2="305.6" y2="548.9"><stop offset="0" stop-color="#807e82"/><stop offset="0.3" stop-color="#7e7f85"/><stop offset="0.55" stop-color="#858b97"/><stop offset="0.78" stop-color="#8e97a8"/><stop offset="1" stop-color="#8f98a9"/></linearGradient>
<linearGradient id="L80" gradientUnits="userSpaceOnUse" x1="348.2" y1="196.6" x2="307.6" y2="549.0"><stop offset="0" stop-color="#807e82"/><stop offset="0.3" stop-color="#7e7f85"/><stop offset="0.55" stop-color="#858a97"/><stop offset="0.78" stop-color="#8e97a8"/><stop offset="1" stop-color="#8f98a9"/></linearGradient>
<linearGradient id="L81" gradientUnits="userSpaceOnUse" x1="349.9" y1="196.3" x2="309.6" y2="549.1"><stop offset="0" stop-color="#807e81"/><stop offset="0.3" stop-color="#7e7e85"/><stop offset="0.55" stop-color="#858a96"/><stop offset="0.78" stop-color="#8d96a7"/><stop offset="1" stop-color="#8e97a8"/></linearGradient>
<linearGradient id="L82" gradientUnits="userSpaceOnUse" x1="351.5" y1="196.0" x2="311.6" y2="549.1"><stop offset="0" stop-color="#7f7d81"/><stop offset="0.3" stop-color="#7e7e84"/><stop offset="0.55" stop-color="#848a96"/><stop offset="0.78" stop-color="#8d96a7"/><stop offset="1" stop-color="#8e97a8"/></linearGradient>
<linearGradient id="L83" gradientUnits="userSpaceOnUse" x1="353.1" y1="195.8" x2="313.6" y2="549.2"><stop offset="0" stop-color="#7f7d81"/><stop offset="0.3" stop-color="#7d7e84"/><stop offset="0.55" stop-color="#848995"/><stop offset="0.78" stop-color="#8c95a6"/><stop offset="1" stop-color="#8d96a7"/></linearGradient>
<linearGradient id="L84" gradientUnits="userSpaceOnUse" x1="354.7" y1="195.5" x2="315.6" y2="549.2"><stop offset="0" stop-color="#7f7d80"/><stop offset="0.3" stop-color="#7d7e84"/><stop offset="0.55" stop-color="#848995"/><stop offset="0.78" stop-color="#8c95a6"/><stop offset="1" stop-color="#8d96a7"/></linearGradient>
<linearGradient id="L85" gradientUnits="userSpaceOnUse" x1="356.3" y1="195.3" x2="317.5" y2="549.3"><stop offset="0" stop-color="#7f7c80"/><stop offset="0.3" stop-color="#7d7d84"/><stop offset="0.55" stop-color="#838995"/><stop offset="0.78" stop-color="#8c95a6"/><stop offset="1" stop-color="#8c95a6"/></linearGradient>
<linearGradient id="L86" gradientUnits="userSpaceOnUse" x1="357.9" y1="195.0" x2="319.5" y2="549.4"><stop offset="0" stop-color="#7f7c7f"/><stop offset="0.3" stop-color="#7d7d83"/><stop offset="0.55" stop-color="#838894"/><stop offset="0.78" stop-color="#8b94a5"/><stop offset="1" stop-color="#8c95a6"/></linearGradient>
<linearGradient id="L87" gradientUnits="userSpaceOnUse" x1="359.5" y1="194.7" x2="321.5" y2="549.4"><stop offset="0" stop-color="#7e7c7f"/><stop offset="0.3" stop-color="#7d7d83"/><stop offset="0.55" stop-color="#838894"/><stop offset="0.78" stop-color="#8b94a5"/><stop offset="1" stop-color="#8b94a5"/></linearGradient>
<linearGradient id="L88" gradientUnits="userSpaceOnUse" x1="361.1" y1="194.5" x2="323.5" y2="549.5"><stop offset="0" stop-color="#7e7c7f"/><stop offset="0.3" stop-color="#7c7d83"/><stop offset="0.55" stop-color="#838894"/><stop offset="0.78" stop-color="#8b94a5"/><stop offset="1" stop-color="#8b94a5"/></linearGradient>
<linearGradient id="L89" gradientUnits="userSpaceOnUse" x1="362.7" y1="194.2" x2="325.5" y2="549.6"><stop offset="0" stop-color="#7e7b7e"/><stop offset="0.3" stop-color="#7c7c82"/><stop offset="0.55" stop-color="#828793"/><stop offset="0.78" stop-color="#8a93a4"/><stop offset="1" stop-color="#8b94a5"/></linearGradient>
<linearGradient id="R0" gradientUnits="userSpaceOnUse" x1="364.7" y1="194.0" x2="328.1" y2="549.6"><stop offset="0" stop-color="#847975"/><stop offset="0.3" stop-color="#797374"/><stop offset="0.55" stop-color="#727177"/><stop offset="0.78" stop-color="#717580"/><stop offset="1" stop-color="#6c717c"/></linearGradient>
<linearGradient id="R1" gradientUnits="userSpaceOnUse" x1="367.2" y1="193.7" x2="331.4" y2="549.7"><stop offset="0" stop-color="#847975"/><stop offset="0.3" stop-color="#797374"/><stop offset="0.55" stop-color="#727177"/><stop offset="0.78" stop-color="#717580"/><stop offset="1" stop-color="#6c707c"/></linearGradient>
<linearGradient id="R2" gradientUnits="userSpaceOnUse" x1="369.6" y1="193.4" x2="334.7" y2="549.8"><stop offset="0" stop-color="#837975"/><stop offset="0.3" stop-color="#797373"/><stop offset="0.55" stop-color="#727177"/><stop offset="0.78" stop-color="#71757f"/><stop offset="1" stop-color="#6b707c"/></linearGradient>
<linearGradient id="R3" gradientUnits="userSpaceOnUse" x1="372.1" y1="193.2" x2="337.9" y2="549.8"><stop offset="0" stop-color="#837874"/><stop offset="0.3" stop-color="#787273"/><stop offset="0.55" stop-color="#717176"/><stop offset="0.78" stop-color="#70747f"/><stop offset="1" stop-color="#6b707c"/></linearGradient>
<linearGradient id="R4" gradientUnits="userSpaceOnUse" x1="374.5" y1="192.9" x2="341.2" y2="549.9"><stop offset="0" stop-color="#837874"/><stop offset="0.3" stop-color="#787273"/><stop offset="0.55" stop-color="#717076"/><stop offset="0.78" stop-color="#70747e"/><stop offset="1" stop-color="#6b707b"/></linearGradient>
<linearGradient id="R5" gradientUnits="userSpaceOnUse" x1="377.0" y1="192.6" x2="344.4" y2="550.0"><stop offset="0" stop-color="#827773"/><stop offset="0.3" stop-color="#777273"/><stop offset="0.55" stop-color="#717076"/><stop offset="0.78" stop-color="#6f737d"/><stop offset="1" stop-color="#6b707b"/></linearGradient>
<linearGradient id="R6" gradientUnits="userSpaceOnUse" x1="379.5" y1="192.4" x2="347.7" y2="550.1"><stop offset="0" stop-color="#817773"/><stop offset="0.3" stop-color="#777173"/><stop offset="0.55" stop-color="#707075"/><stop offset="0.78" stop-color="#6f737d"/><stop offset="1" stop-color="#6b6f7b"/></linearGradient>
<linearGradient id="R7" gradientUnits="userSpaceOnUse" x1="381.9" y1="192.1" x2="351.0" y2="550.1"><stop offset="0" stop-color="#817673"/><stop offset="0.3" stop-color="#767172"/><stop offset="0.55" stop-color="#706f75"/><stop offset="0.78" stop-color="#6f727c"/><stop offset="1" stop-color="#6a6f7a"/></linearGradient>
<linearGradient id="R8" gradientUnits="userSpaceOnUse" x1="384.4" y1="191.9" x2="354.2" y2="550.2"><stop offset="0" stop-color="#807672"/><stop offset="0.3" stop-color="#757072"/><stop offset="0.55" stop-color="#6f6f74"/><stop offset="0.78" stop-color="#6e727c"/><stop offset="1" stop-color="#6a6f7a"/></linearGradient>
<linearGradient id="R9" gradientUnits="userSpaceOnUse" x1="386.8" y1="191.6" x2="357.5" y2="550.3"><stop offset="0" stop-color="#807572"/><stop offset="0.3" stop-color="#757071"/><stop offset="0.55" stop-color="#6f6e74"/><stop offset="0.78" stop-color="#6e717b"/><stop offset="1" stop-color="#6a6f7a"/></linearGradient>
<linearGradient id="R10" gradientUnits="userSpaceOnUse" x1="389.3" y1="191.3" x2="360.8" y2="550.3"><stop offset="0" stop-color="#7f7571"/><stop offset="0.3" stop-color="#746f71"/><stop offset="0.55" stop-color="#6f6e74"/><stop offset="0.78" stop-color="#6d717a"/><stop offset="1" stop-color="#6a6e79"/></linearGradient>
<linearGradient id="R11" gradientUnits="userSpaceOnUse" x1="391.7" y1="191.1" x2="364.0" y2="550.4"><stop offset="0" stop-color="#7f7471"/><stop offset="0.3" stop-color="#736f71"/><stop offset="0.55" stop-color="#6e6e73"/><stop offset="0.78" stop-color="#6d707a"/><stop offset="1" stop-color="#6a6e79"/></linearGradient>
<linearGradient id="R12" gradientUnits="userSpaceOnUse" x1="394.2" y1="190.8" x2="367.3" y2="550.5"><stop offset="0" stop-color="#7e7470"/><stop offset="0.3" stop-color="#736e70"/><stop offset="0.55" stop-color="#6e6d73"/><stop offset="0.78" stop-color="#6c7079"/><stop offset="1" stop-color="#696e78"/></linearGradient>
<linearGradient id="R13" gradientUnits="userSpaceOnUse" x1="396.6" y1="190.5" x2="370.5" y2="550.6"><stop offset="0" stop-color="#7e7370"/><stop offset="0.3" stop-color="#726d6f"/><stop offset="0.55" stop-color="#6d6d72"/><stop offset="0.78" stop-color="#6c6f78"/><stop offset="1" stop-color="#696e78"/></linearGradient>
<linearGradient id="R14" gradientUnits="userSpaceOnUse" x1="399.1" y1="190.3" x2="373.8" y2="550.6"><stop offset="0" stop-color="#7d736f"/><stop offset="0.3" stop-color="#716d6f"/><stop offset="0.55" stop-color="#6d6d72"/><stop offset="0.78" stop-color="#6b6f78"/><stop offset="1" stop-color="#696d78"/></linearGradient>
<linearGradient id="R15" gradientUnits="userSpaceOnUse" x1="401.5" y1="190.0" x2="377.1" y2="550.7"><stop offset="0" stop-color="#7d726f"/><stop offset="0.3" stop-color="#706c6e"/><stop offset="0.55" stop-color="#6d6c72"/><stop offset="0.78" stop-color="#6b6e77"/><stop offset="1" stop-color="#696d77"/></linearGradient>
<linearGradient id="R16" gradientUnits="userSpaceOnUse" x1="404.0" y1="189.7" x2="380.3" y2="550.8"><stop offset="0" stop-color="#7c726e"/><stop offset="0.3" stop-color="#706b6d"/><stop offset="0.55" stop-color="#6c6c71"/><stop offset="0.78" stop-color="#6b6e76"/><stop offset="1" stop-color="#686d77"/></linearGradient>
<linearGradient id="R17" gradientUnits="userSpaceOnUse" x1="406.4" y1="189.5" x2="383.6" y2="550.8"><stop offset="0" stop-color="#7c716e"/><stop offset="0.3" stop-color="#6f6b6d"/><stop offset="0.55" stop-color="#6c6b71"/><stop offset="0.78" stop-color="#6a6d76"/><stop offset="1" stop-color="#686d77"/></linearGradient>
<linearGradient id="R18" gradientUnits="userSpaceOnUse" x1="408.9" y1="189.2" x2="386.9" y2="550.9"><stop offset="0" stop-color="#7b716e"/><stop offset="0.3" stop-color="#6e6a6c"/><stop offset="0.55" stop-color="#6b6b70"/><stop offset="0.78" stop-color="#6a6d75"/><stop offset="1" stop-color="#686c76"/></linearGradient>
<linearGradient id="R19" gradientUnits="userSpaceOnUse" x1="411.4" y1="189.0" x2="390.1" y2="551.0"><stop offset="0" stop-color="#7a706d"/><stop offset="0.3" stop-color="#6d696b"/><stop offset="0.55" stop-color="#6b6b70"/><stop offset="0.78" stop-color="#696c74"/><stop offset="1" stop-color="#686c76"/></linearGradient>
<linearGradient id="R20" gradientUnits="userSpaceOnUse" x1="413.8" y1="188.7" x2="393.4" y2="551.1"><stop offset="0" stop-color="#7a706d"/><stop offset="0.3" stop-color="#6d696b"/><stop offset="0.55" stop-color="#6a6a6f"/><stop offset="0.78" stop-color="#696c74"/><stop offset="1" stop-color="#686c76"/></linearGradient>
<linearGradient id="R21" gradientUnits="userSpaceOnUse" x1="416.3" y1="188.4" x2="396.6" y2="551.1"><stop offset="0" stop-color="#796f6c"/><stop offset="0.3" stop-color="#6c686a"/><stop offset="0.55" stop-color="#6a6a6f"/><stop offset="0.78" stop-color="#686b73"/><stop offset="1" stop-color="#676c75"/></linearGradient>
<linearGradient id="R22" gradientUnits="userSpaceOnUse" x1="418.7" y1="188.2" x2="399.9" y2="551.2"><stop offset="0" stop-color="#796f6c"/><stop offset="0.3" stop-color="#6b6769"/><stop offset="0.55" stop-color="#6a696f"/><stop offset="0.78" stop-color="#686b73"/><stop offset="1" stop-color="#676b75"/></linearGradient>
<linearGradient id="R23" gradientUnits="userSpaceOnUse" x1="421.2" y1="187.9" x2="403.2" y2="551.2"><stop offset="0" stop-color="#786e6b"/><stop offset="0.3" stop-color="#6a6769"/><stop offset="0.55" stop-color="#69696e"/><stop offset="0.78" stop-color="#676a72"/><stop offset="1" stop-color="#676b74"/></linearGradient>
<linearGradient id="R24" gradientUnits="userSpaceOnUse" x1="423.6" y1="187.7" x2="406.4" y2="551.1"><stop offset="0" stop-color="#776e6b"/><stop offset="0.3" stop-color="#6a6668"/><stop offset="0.55" stop-color="#69696e"/><stop offset="0.78" stop-color="#676a71"/><stop offset="1" stop-color="#676b74"/></linearGradient>
<linearGradient id="R25" gradientUnits="userSpaceOnUse" x1="426.1" y1="187.7" x2="409.7" y2="551.1"><stop offset="0" stop-color="#776d6a"/><stop offset="0.3" stop-color="#696567"/><stop offset="0.55" stop-color="#68686d"/><stop offset="0.78" stop-color="#666971"/><stop offset="1" stop-color="#666a74"/></linearGradient>
<linearGradient id="R26" gradientUnits="userSpaceOnUse" x1="428.5" y1="187.7" x2="413.0" y2="551.1"><stop offset="0" stop-color="#766d6a"/><stop offset="0.3" stop-color="#686567"/><stop offset="0.55" stop-color="#68686c"/><stop offset="0.78" stop-color="#666970"/><stop offset="1" stop-color="#666a73"/></linearGradient>
<linearGradient id="R27" gradientUnits="userSpaceOnUse" x1="431.0" y1="187.7" x2="416.2" y2="551.1"><stop offset="0" stop-color="#756c69"/><stop offset="0.3" stop-color="#676466"/><stop offset="0.55" stop-color="#67676c"/><stop offset="0.78" stop-color="#65686f"/><stop offset="1" stop-color="#666a73"/></linearGradient>
<linearGradient id="R28" gradientUnits="userSpaceOnUse" x1="433.4" y1="187.7" x2="419.5" y2="551.0"><stop offset="0" stop-color="#756b69"/><stop offset="0.3" stop-color="#666365"/><stop offset="0.55" stop-color="#66666b"/><stop offset="0.78" stop-color="#65686f"/><stop offset="1" stop-color="#656972"/></linearGradient>
<linearGradient id="R29" gradientUnits="userSpaceOnUse" x1="435.9" y1="187.7" x2="422.7" y2="551.0"><stop offset="0" stop-color="#746b68"/><stop offset="0.3" stop-color="#666365"/><stop offset="0.55" stop-color="#66666b"/><stop offset="0.78" stop-color="#64676e"/><stop offset="1" stop-color="#656971"/></linearGradient>
<linearGradient id="R30" gradientUnits="userSpaceOnUse" x1="438.4" y1="187.7" x2="426.0" y2="551.0"><stop offset="0" stop-color="#736a68"/><stop offset="0.3" stop-color="#656264"/><stop offset="0.55" stop-color="#65656a"/><stop offset="0.78" stop-color="#64666d"/><stop offset="1" stop-color="#646871"/></linearGradient>
<linearGradient id="R31" gradientUnits="userSpaceOnUse" x1="440.8" y1="187.7" x2="429.3" y2="551.0"><stop offset="0" stop-color="#726a67"/><stop offset="0.3" stop-color="#646163"/><stop offset="0.55" stop-color="#656569"/><stop offset="0.78" stop-color="#63666d"/><stop offset="1" stop-color="#636770"/></linearGradient>
<linearGradient id="R32" gradientUnits="userSpaceOnUse" x1="443.3" y1="187.7" x2="432.5" y2="550.9"><stop offset="0" stop-color="#726967"/><stop offset="0.3" stop-color="#636163"/><stop offset="0.55" stop-color="#646469"/><stop offset="0.78" stop-color="#62656c"/><stop offset="1" stop-color="#63676f"/></linearGradient>
<linearGradient id="R33" gradientUnits="userSpaceOnUse" x1="445.7" y1="187.7" x2="435.8" y2="550.9"><stop offset="0" stop-color="#716966"/><stop offset="0.3" stop-color="#636062"/><stop offset="0.55" stop-color="#646468"/><stop offset="0.78" stop-color="#62656b"/><stop offset="1" stop-color="#62666e"/></linearGradient>
<linearGradient id="R34" gradientUnits="userSpaceOnUse" x1="448.2" y1="187.7" x2="439.1" y2="550.9"><stop offset="0" stop-color="#706866"/><stop offset="0.3" stop-color="#625f61"/><stop offset="0.55" stop-color="#636368"/><stop offset="0.78" stop-color="#61646b"/><stop offset="1" stop-color="#62656e"/></linearGradient>
<linearGradient id="R35" gradientUnits="userSpaceOnUse" x1="450.6" y1="188.1" x2="442.3" y2="550.9"><stop offset="0" stop-color="#706765"/><stop offset="0.3" stop-color="#615f61"/><stop offset="0.55" stop-color="#626267"/><stop offset="0.78" stop-color="#61636a"/><stop offset="1" stop-color="#61656d"/></linearGradient>
<linearGradient id="R36" gradientUnits="userSpaceOnUse" x1="453.1" y1="188.6" x2="445.6" y2="550.8"><stop offset="0" stop-color="#6f6765"/><stop offset="0.3" stop-color="#605e60"/><stop offset="0.55" stop-color="#626266"/><stop offset="0.78" stop-color="#606369"/><stop offset="1" stop-color="#60646c"/></linearGradient>
<linearGradient id="R37" gradientUnits="userSpaceOnUse" x1="455.5" y1="189.0" x2="448.8" y2="550.8"><stop offset="0" stop-color="#6e6664"/><stop offset="0.3" stop-color="#605d5f"/><stop offset="0.55" stop-color="#616166"/><stop offset="0.78" stop-color="#606269"/><stop offset="1" stop-color="#60636b"/></linearGradient>
<linearGradient id="R38" gradientUnits="userSpaceOnUse" x1="458.0" y1="189.0" x2="452.1" y2="550.8"><stop offset="0" stop-color="#6d6664"/><stop offset="0.3" stop-color="#5f5d5f"/><stop offset="0.55" stop-color="#616165"/><stop offset="0.78" stop-color="#5f6268"/><stop offset="1" stop-color="#5f636b"/></linearGradient>
<linearGradient id="R39" gradientUnits="userSpaceOnUse" x1="460.4" y1="188.9" x2="455.4" y2="550.7"><stop offset="0" stop-color="#6d6563"/><stop offset="0.3" stop-color="#5e5c5e"/><stop offset="0.55" stop-color="#606065"/><stop offset="0.78" stop-color="#5e6167"/><stop offset="1" stop-color="#5e626a"/></linearGradient>
<linearGradient id="R40" gradientUnits="userSpaceOnUse" x1="462.9" y1="188.9" x2="458.6" y2="550.7"><stop offset="0" stop-color="#6c6563"/><stop offset="0.3" stop-color="#5d5b5d"/><stop offset="0.55" stop-color="#606064"/><stop offset="0.78" stop-color="#5e6067"/><stop offset="1" stop-color="#5e6169"/></linearGradient>
<linearGradient id="R41" gradientUnits="userSpaceOnUse" x1="465.3" y1="188.9" x2="461.9" y2="550.7"><stop offset="0" stop-color="#6b6462"/><stop offset="0.3" stop-color="#5d5b5d"/><stop offset="0.55" stop-color="#5f5f64"/><stop offset="0.78" stop-color="#5d6066"/><stop offset="1" stop-color="#5d6168"/></linearGradient>
<linearGradient id="R42" gradientUnits="userSpaceOnUse" x1="467.8" y1="188.9" x2="465.2" y2="550.7"><stop offset="0" stop-color="#6a6462"/><stop offset="0.3" stop-color="#5c5a5c"/><stop offset="0.55" stop-color="#5f5f63"/><stop offset="0.78" stop-color="#5d5f65"/><stop offset="1" stop-color="#5d6068"/></linearGradient>
<linearGradient id="R43" gradientUnits="userSpaceOnUse" x1="470.3" y1="188.8" x2="468.4" y2="550.6"><stop offset="0" stop-color="#6a6361"/><stop offset="0.3" stop-color="#5c5a5b"/><stop offset="0.55" stop-color="#5e5e62"/><stop offset="0.78" stop-color="#5c5f64"/><stop offset="1" stop-color="#5c5f67"/></linearGradient>
<linearGradient id="R44" gradientUnits="userSpaceOnUse" x1="472.7" y1="188.8" x2="471.7" y2="550.6"><stop offset="0" stop-color="#696261"/><stop offset="0.3" stop-color="#5b595b"/><stop offset="0.55" stop-color="#5d5d62"/><stop offset="0.78" stop-color="#5c5e64"/><stop offset="1" stop-color="#5b5f66"/></linearGradient>
<linearGradient id="R45" gradientUnits="userSpaceOnUse" x1="475.2" y1="188.8" x2="474.9" y2="550.6"><stop offset="0" stop-color="#686260"/><stop offset="0.3" stop-color="#5a585a"/><stop offset="0.55" stop-color="#5d5d61"/><stop offset="0.78" stop-color="#5b5d63"/><stop offset="1" stop-color="#5b5e65"/></linearGradient>
<linearGradient id="R46" gradientUnits="userSpaceOnUse" x1="477.6" y1="188.8" x2="478.2" y2="550.6"><stop offset="0" stop-color="#686160"/><stop offset="0.3" stop-color="#5a5859"/><stop offset="0.55" stop-color="#5c5c60"/><stop offset="0.78" stop-color="#5a5d62"/><stop offset="1" stop-color="#5a5d65"/></linearGradient>
<linearGradient id="R47" gradientUnits="userSpaceOnUse" x1="480.1" y1="188.7" x2="481.5" y2="550.5"><stop offset="0" stop-color="#67615f"/><stop offset="0.3" stop-color="#595759"/><stop offset="0.55" stop-color="#5c5c60"/><stop offset="0.78" stop-color="#5a5c62"/><stop offset="1" stop-color="#595d64"/></linearGradient>
<linearGradient id="R48" gradientUnits="userSpaceOnUse" x1="482.5" y1="188.7" x2="484.7" y2="550.5"><stop offset="0" stop-color="#66605f"/><stop offset="0.3" stop-color="#595758"/><stop offset="0.55" stop-color="#5b5b5f"/><stop offset="0.78" stop-color="#595c61"/><stop offset="1" stop-color="#595c63"/></linearGradient>
<linearGradient id="R49" gradientUnits="userSpaceOnUse" x1="485.0" y1="188.8" x2="488.0" y2="550.4"><stop offset="0" stop-color="#65605e"/><stop offset="0.3" stop-color="#585657"/><stop offset="0.55" stop-color="#5b5b5f"/><stop offset="0.78" stop-color="#595b60"/><stop offset="1" stop-color="#585b62"/></linearGradient>
<linearGradient id="R50" gradientUnits="userSpaceOnUse" x1="487.4" y1="189.1" x2="491.3" y2="550.4"><stop offset="0" stop-color="#655f5e"/><stop offset="0.3" stop-color="#585657"/><stop offset="0.55" stop-color="#5a5a5e"/><stop offset="0.78" stop-color="#585a60"/><stop offset="1" stop-color="#575b61"/></linearGradient>
<linearGradient id="R51" gradientUnits="userSpaceOnUse" x1="489.9" y1="189.4" x2="494.5" y2="550.3"><stop offset="0" stop-color="#645e5d"/><stop offset="0.3" stop-color="#575556"/><stop offset="0.55" stop-color="#59595d"/><stop offset="0.78" stop-color="#585a5f"/><stop offset="1" stop-color="#575a61"/></linearGradient>
<linearGradient id="R52" gradientUnits="userSpaceOnUse" x1="492.3" y1="189.8" x2="497.8" y2="550.2"><stop offset="0" stop-color="#635e5d"/><stop offset="0.3" stop-color="#565456"/><stop offset="0.55" stop-color="#59595d"/><stop offset="0.78" stop-color="#57595e"/><stop offset="1" stop-color="#565960"/></linearGradient>
<linearGradient id="R53" gradientUnits="userSpaceOnUse" x1="494.8" y1="190.1" x2="501.0" y2="550.1"><stop offset="0" stop-color="#625d5c"/><stop offset="0.3" stop-color="#565455"/><stop offset="0.55" stop-color="#58585c"/><stop offset="0.78" stop-color="#56595e"/><stop offset="1" stop-color="#56595f"/></linearGradient>
<linearGradient id="R54" gradientUnits="userSpaceOnUse" x1="497.3" y1="190.5" x2="504.3" y2="550.1"><stop offset="0" stop-color="#625d5b"/><stop offset="0.3" stop-color="#555354"/><stop offset="0.55" stop-color="#58585c"/><stop offset="0.78" stop-color="#56585d"/><stop offset="1" stop-color="#55585e"/></linearGradient>
<linearGradient id="R55" gradientUnits="userSpaceOnUse" x1="499.7" y1="190.8" x2="507.6" y2="550.0"><stop offset="0" stop-color="#615c5b"/><stop offset="0.3" stop-color="#555354"/><stop offset="0.55" stop-color="#57575b"/><stop offset="0.78" stop-color="#55575c"/><stop offset="1" stop-color="#54575e"/></linearGradient>
<linearGradient id="R56" gradientUnits="userSpaceOnUse" x1="502.2" y1="191.2" x2="510.8" y2="549.9"><stop offset="0" stop-color="#605b5a"/><stop offset="0.3" stop-color="#545253"/><stop offset="0.55" stop-color="#57575a"/><stop offset="0.78" stop-color="#55575c"/><stop offset="1" stop-color="#54575d"/></linearGradient>
<linearGradient id="R57" gradientUnits="userSpaceOnUse" x1="504.6" y1="191.5" x2="514.1" y2="549.9"><stop offset="0" stop-color="#605b59"/><stop offset="0.3" stop-color="#545252"/><stop offset="0.55" stop-color="#56565a"/><stop offset="0.78" stop-color="#54565b"/><stop offset="1" stop-color="#53565c"/></linearGradient>
<linearGradient id="R58" gradientUnits="userSpaceOnUse" x1="507.1" y1="191.9" x2="517.4" y2="549.8"><stop offset="0" stop-color="#5f5a59"/><stop offset="0.3" stop-color="#535152"/><stop offset="0.55" stop-color="#565659"/><stop offset="0.78" stop-color="#54565a"/><stop offset="1" stop-color="#53565c"/></linearGradient>
<linearGradient id="R59" gradientUnits="userSpaceOnUse" x1="509.5" y1="192.2" x2="520.6" y2="549.7"><stop offset="0" stop-color="#5e5958"/><stop offset="0.3" stop-color="#525051"/><stop offset="0.55" stop-color="#555559"/><stop offset="0.78" stop-color="#53555a"/><stop offset="1" stop-color="#52555b"/></linearGradient>
<linearGradient id="R60" gradientUnits="userSpaceOnUse" x1="512.0" y1="192.6" x2="523.9" y2="549.6"><stop offset="0" stop-color="#5d5957"/><stop offset="0.3" stop-color="#525051"/><stop offset="0.55" stop-color="#545458"/><stop offset="0.78" stop-color="#525459"/><stop offset="1" stop-color="#52545a"/></linearGradient>
<linearGradient id="R61" gradientUnits="userSpaceOnUse" x1="514.4" y1="192.9" x2="527.1" y2="549.6"><stop offset="0" stop-color="#5d5856"/><stop offset="0.3" stop-color="#514f50"/><stop offset="0.55" stop-color="#545457"/><stop offset="0.78" stop-color="#525458"/><stop offset="1" stop-color="#515459"/></linearGradient>
<linearGradient id="R62" gradientUnits="userSpaceOnUse" x1="516.9" y1="193.2" x2="530.4" y2="549.5"><stop offset="0" stop-color="#5c5756"/><stop offset="0.3" stop-color="#514f4f"/><stop offset="0.55" stop-color="#535357"/><stop offset="0.78" stop-color="#515358"/><stop offset="1" stop-color="#505359"/></linearGradient>
<linearGradient id="R63" gradientUnits="userSpaceOnUse" x1="519.3" y1="193.5" x2="533.7" y2="549.4"><stop offset="0" stop-color="#5b5755"/><stop offset="0.3" stop-color="#504e4f"/><stop offset="0.55" stop-color="#535356"/><stop offset="0.78" stop-color="#515357"/><stop offset="1" stop-color="#505358"/></linearGradient>
<linearGradient id="R64" gradientUnits="userSpaceOnUse" x1="521.8" y1="193.9" x2="536.9" y2="549.4"><stop offset="0" stop-color="#5b5654"/><stop offset="0.3" stop-color="#504e4e"/><stop offset="0.55" stop-color="#525256"/><stop offset="0.78" stop-color="#505257"/><stop offset="1" stop-color="#4f5258"/></linearGradient>
<linearGradient id="R65" gradientUnits="userSpaceOnUse" x1="524.2" y1="194.2" x2="540.2" y2="549.3"><stop offset="0" stop-color="#5a5553"/><stop offset="0.3" stop-color="#4f4d4d"/><stop offset="0.55" stop-color="#525255"/><stop offset="0.78" stop-color="#505256"/><stop offset="1" stop-color="#4f5257"/></linearGradient>
<linearGradient id="R66" gradientUnits="userSpaceOnUse" x1="526.7" y1="194.5" x2="543.5" y2="549.2"><stop offset="0" stop-color="#595553"/><stop offset="0.3" stop-color="#4e4c4d"/><stop offset="0.55" stop-color="#515154"/><stop offset="0.78" stop-color="#4f5155"/><stop offset="1" stop-color="#4e5156"/></linearGradient>
<linearGradient id="R67" gradientUnits="userSpaceOnUse" x1="529.2" y1="194.8" x2="546.7" y2="549.1"><stop offset="0" stop-color="#585452"/><stop offset="0.3" stop-color="#4e4c4c"/><stop offset="0.55" stop-color="#505054"/><stop offset="0.78" stop-color="#4f5055"/><stop offset="1" stop-color="#4e5056"/></linearGradient>
<linearGradient id="R68" gradientUnits="userSpaceOnUse" x1="531.6" y1="195.2" x2="550.0" y2="549.1"><stop offset="0" stop-color="#585351"/><stop offset="0.3" stop-color="#4d4b4c"/><stop offset="0.55" stop-color="#505053"/><stop offset="0.78" stop-color="#4e5054"/><stop offset="1" stop-color="#4d5055"/></linearGradient>
<linearGradient id="R69" gradientUnits="userSpaceOnUse" x1="534.1" y1="195.5" x2="553.2" y2="549.0"><stop offset="0" stop-color="#575251"/><stop offset="0.3" stop-color="#4d4b4b"/><stop offset="0.55" stop-color="#4f4f52"/><stop offset="0.78" stop-color="#4e4f53"/><stop offset="1" stop-color="#4d4f54"/></linearGradient>
<linearGradient id="R70" gradientUnits="userSpaceOnUse" x1="536.5" y1="195.8" x2="556.5" y2="548.9"><stop offset="0" stop-color="#565250"/><stop offset="0.3" stop-color="#4c4a4a"/><stop offset="0.55" stop-color="#4f4f52"/><stop offset="0.78" stop-color="#4d4f53"/><stop offset="1" stop-color="#4c4f54"/></linearGradient>
<linearGradient id="R71" gradientUnits="userSpaceOnUse" x1="539.0" y1="196.1" x2="559.8" y2="548.8"><stop offset="0" stop-color="#56514f"/><stop offset="0.3" stop-color="#4c4a4a"/><stop offset="0.55" stop-color="#4e4e51"/><stop offset="0.78" stop-color="#4d4e52"/><stop offset="1" stop-color="#4c4e53"/></linearGradient>
<linearGradient id="R72" gradientUnits="userSpaceOnUse" x1="541.4" y1="196.5" x2="563.0" y2="548.7"><stop offset="0" stop-color="#55504e"/><stop offset="0.3" stop-color="#4b4949"/><stop offset="0.55" stop-color="#4e4e51"/><stop offset="0.78" stop-color="#4c4e51"/><stop offset="1" stop-color="#4b4e52"/></linearGradient>
<linearGradient id="R73" gradientUnits="userSpaceOnUse" x1="543.9" y1="197.1" x2="566.3" y2="548.7"><stop offset="0" stop-color="#54504e"/><stop offset="0.3" stop-color="#4b4949"/><stop offset="0.55" stop-color="#4d4d50"/><stop offset="0.78" stop-color="#4c4d51"/><stop offset="1" stop-color="#4b4d52"/></linearGradient>
<linearGradient id="R74" gradientUnits="userSpaceOnUse" x1="546.3" y1="197.8" x2="569.6" y2="548.6"><stop offset="0" stop-color="#534f4d"/><stop offset="0.3" stop-color="#4b4848"/><stop offset="0.55" stop-color="#4d4d4f"/><stop offset="0.78" stop-color="#4b4d50"/><stop offset="1" stop-color="#4a4d51"/></linearGradient>
<linearGradient id="R75" gradientUnits="userSpaceOnUse" x1="548.8" y1="198.4" x2="572.8" y2="548.5"><stop offset="0" stop-color="#534e4c"/><stop offset="0.3" stop-color="#4a4848"/><stop offset="0.55" stop-color="#4c4c4f"/><stop offset="0.78" stop-color="#4b4c4f"/><stop offset="1" stop-color="#4a4c50"/></linearGradient>
<linearGradient id="R76" gradientUnits="userSpaceOnUse" x1="551.2" y1="199.1" x2="576.1" y2="548.4"><stop offset="0" stop-color="#524e4b"/><stop offset="0.3" stop-color="#4a4847"/><stop offset="0.55" stop-color="#4c4c4e"/><stop offset="0.78" stop-color="#4a4c4f"/><stop offset="1" stop-color="#494c50"/></linearGradient>
<linearGradient id="R77" gradientUnits="userSpaceOnUse" x1="553.7" y1="199.7" x2="579.3" y2="548.3"><stop offset="0" stop-color="#514d4b"/><stop offset="0.3" stop-color="#494747"/><stop offset="0.55" stop-color="#4b4b4d"/><stop offset="0.78" stop-color="#4a4b4e"/><stop offset="1" stop-color="#494b4f"/></linearGradient>
<linearGradient id="R78" gradientUnits="userSpaceOnUse" x1="556.2" y1="200.3" x2="582.6" y2="548.2"><stop offset="0" stop-color="#514c4a"/><stop offset="0.3" stop-color="#494746"/><stop offset="0.55" stop-color="#4a4a4d"/><stop offset="0.78" stop-color="#494a4d"/><stop offset="1" stop-color="#484a4e"/></linearGradient>
<linearGradient id="R79" gradientUnits="userSpaceOnUse" x1="558.6" y1="201.0" x2="585.9" y2="548.2"><stop offset="0" stop-color="#504c49"/><stop offset="0.3" stop-color="#494646"/><stop offset="0.55" stop-color="#4a4a4c"/><stop offset="0.78" stop-color="#494a4d"/><stop offset="1" stop-color="#484a4e"/></linearGradient>
<linearGradient id="R80" gradientUnits="userSpaceOnUse" x1="561.1" y1="201.6" x2="589.1" y2="548.1"><stop offset="0" stop-color="#4f4b48"/><stop offset="0.3" stop-color="#484645"/><stop offset="0.55" stop-color="#49494c"/><stop offset="0.78" stop-color="#48494c"/><stop offset="1" stop-color="#47494d"/></linearGradient>
<linearGradient id="R81" gradientUnits="userSpaceOnUse" x1="563.5" y1="202.2" x2="592.4" y2="548.0"><stop offset="0" stop-color="#4e4a48"/><stop offset="0.3" stop-color="#484545"/><stop offset="0.55" stop-color="#49494b"/><stop offset="0.78" stop-color="#47494c"/><stop offset="1" stop-color="#46494d"/></linearGradient>
<linearGradient id="R82" gradientUnits="userSpaceOnUse" x1="566.0" y1="202.9" x2="595.7" y2="547.9"><stop offset="0" stop-color="#4e4a47"/><stop offset="0.3" stop-color="#474544"/><stop offset="0.55" stop-color="#48484a"/><stop offset="0.78" stop-color="#47484b"/><stop offset="1" stop-color="#46484c"/></linearGradient>
<linearGradient id="R83" gradientUnits="userSpaceOnUse" x1="568.4" y1="203.5" x2="598.9" y2="547.8"><stop offset="0" stop-color="#4d4946"/><stop offset="0.3" stop-color="#474444"/><stop offset="0.55" stop-color="#48484a"/><stop offset="0.78" stop-color="#46484a"/><stop offset="1" stop-color="#45484b"/></linearGradient>
<linearGradient id="R84" gradientUnits="userSpaceOnUse" x1="570.9" y1="204.2" x2="602.2" y2="547.7"><stop offset="0" stop-color="#4c4846"/><stop offset="0.3" stop-color="#474443"/><stop offset="0.55" stop-color="#474749"/><stop offset="0.78" stop-color="#46474a"/><stop offset="1" stop-color="#45474b"/></linearGradient>
<linearGradient id="R85" gradientUnits="userSpaceOnUse" x1="573.3" y1="204.8" x2="605.4" y2="547.6"><stop offset="0" stop-color="#4c4845"/><stop offset="0.3" stop-color="#464443"/><stop offset="0.55" stop-color="#474749"/><stop offset="0.78" stop-color="#454749"/><stop offset="1" stop-color="#44474a"/></linearGradient>
<linearGradient id="R86" gradientUnits="userSpaceOnUse" x1="575.8" y1="205.4" x2="608.7" y2="547.4"><stop offset="0" stop-color="#4b4744"/><stop offset="0.3" stop-color="#464342"/><stop offset="0.55" stop-color="#464648"/><stop offset="0.78" stop-color="#454648"/><stop offset="1" stop-color="#444649"/></linearGradient>
<linearGradient id="R87" gradientUnits="userSpaceOnUse" x1="578.2" y1="206.1" x2="612.0" y2="547.3"><stop offset="0" stop-color="#4b4744"/><stop offset="0.3" stop-color="#454342"/><stop offset="0.55" stop-color="#464648"/><stop offset="0.78" stop-color="#444548"/><stop offset="1" stop-color="#434549"/></linearGradient>
<linearGradient id="R88" gradientUnits="userSpaceOnUse" x1="580.7" y1="206.7" x2="615.2" y2="547.2"><stop offset="0" stop-color="#4a4643"/><stop offset="0.3" stop-color="#454241"/><stop offset="0.55" stop-color="#454547"/><stop offset="0.78" stop-color="#444547"/><stop offset="1" stop-color="#434548"/></linearGradient>
<linearGradient id="R89" gradientUnits="userSpaceOnUse" x1="583.1" y1="207.3" x2="618.5" y2="547.0"><stop offset="0" stop-color="#4a4643"/><stop offset="0.3" stop-color="#454241"/><stop offset="0.55" stop-color="#454546"/><stop offset="0.78" stop-color="#434447"/><stop offset="1" stop-color="#424448"/></linearGradient>
<linearGradient id="R90" gradientUnits="userSpaceOnUse" x1="585.6" y1="208.0" x2="621.8" y2="546.9"><stop offset="0" stop-color="#494542"/><stop offset="0.3" stop-color="#444140"/><stop offset="0.55" stop-color="#454446"/><stop offset="0.78" stop-color="#434446"/><stop offset="1" stop-color="#424447"/></linearGradient>
<linearGradient id="R91" gradientUnits="userSpaceOnUse" x1="588.1" y1="208.7" x2="625.0" y2="546.7"><stop offset="0" stop-color="#494542"/><stop offset="0.3" stop-color="#444140"/><stop offset="0.55" stop-color="#444445"/><stop offset="0.78" stop-color="#434446"/><stop offset="1" stop-color="#424446"/></linearGradient>
<linearGradient id="R92" gradientUnits="userSpaceOnUse" x1="590.5" y1="209.7" x2="628.3" y2="546.5"><stop offset="0" stop-color="#484441"/><stop offset="0.3" stop-color="#43413f"/><stop offset="0.55" stop-color="#444445"/><stop offset="0.78" stop-color="#424345"/><stop offset="1" stop-color="#414346"/></linearGradient>
<linearGradient id="R93" gradientUnits="userSpaceOnUse" x1="593.0" y1="210.8" x2="631.5" y2="546.4"><stop offset="0" stop-color="#484441"/><stop offset="0.3" stop-color="#43403f"/><stop offset="0.55" stop-color="#434344"/><stop offset="0.78" stop-color="#424345"/><stop offset="1" stop-color="#414346"/></linearGradient>
<linearGradient id="R94" gradientUnits="userSpaceOnUse" x1="595.4" y1="211.8" x2="634.8" y2="546.2"><stop offset="0" stop-color="#474441"/><stop offset="0.3" stop-color="#43403e"/><stop offset="0.55" stop-color="#434344"/><stop offset="0.78" stop-color="#424344"/><stop offset="1" stop-color="#414345"/></linearGradient>
<linearGradient id="R95" gradientUnits="userSpaceOnUse" x1="597.9" y1="212.8" x2="638.1" y2="546.0"><stop offset="0" stop-color="#474340"/><stop offset="0.3" stop-color="#423f3e"/><stop offset="0.55" stop-color="#434243"/><stop offset="0.78" stop-color="#414244"/><stop offset="1" stop-color="#404245"/></linearGradient>
<linearGradient id="R96" gradientUnits="userSpaceOnUse" x1="600.3" y1="213.8" x2="641.3" y2="545.9"><stop offset="0" stop-color="#464340"/><stop offset="0.3" stop-color="#423f3d"/><stop offset="0.55" stop-color="#424243"/><stop offset="0.78" stop-color="#414243"/><stop offset="1" stop-color="#404244"/></linearGradient>
<linearGradient id="R97" gradientUnits="userSpaceOnUse" x1="602.8" y1="214.9" x2="644.6" y2="545.7"><stop offset="0" stop-color="#46423f"/><stop offset="0.3" stop-color="#413e3d"/><stop offset="0.55" stop-color="#424242"/><stop offset="0.78" stop-color="#414243"/><stop offset="1" stop-color="#404244"/></linearGradient>
<linearGradient id="R98" gradientUnits="userSpaceOnUse" x1="605.2" y1="215.9" x2="647.9" y2="545.5"><stop offset="0" stop-color="#46423f"/><stop offset="0.3" stop-color="#413e3c"/><stop offset="0.55" stop-color="#424142"/><stop offset="0.78" stop-color="#404143"/><stop offset="1" stop-color="#3f4143"/></linearGradient>
<linearGradient id="R99" gradientUnits="userSpaceOnUse" x1="607.7" y1="216.9" x2="651.1" y2="545.3"><stop offset="0" stop-color="#45423f"/><stop offset="0.3" stop-color="#413e3c"/><stop offset="0.55" stop-color="#414141"/><stop offset="0.78" stop-color="#404142"/><stop offset="1" stop-color="#3f4143"/></linearGradient>
<linearGradient id="R100" gradientUnits="userSpaceOnUse" x1="610.1" y1="218.0" x2="654.4" y2="545.2"><stop offset="0" stop-color="#45413e"/><stop offset="0.3" stop-color="#403d3b"/><stop offset="0.55" stop-color="#414141"/><stop offset="0.78" stop-color="#404142"/><stop offset="1" stop-color="#3f4142"/></linearGradient>
<linearGradient id="R101" gradientUnits="userSpaceOnUse" x1="612.6" y1="219.0" x2="657.6" y2="545.0"><stop offset="0" stop-color="#44413e"/><stop offset="0.3" stop-color="#403d3b"/><stop offset="0.55" stop-color="#414040"/><stop offset="0.78" stop-color="#404041"/><stop offset="1" stop-color="#3f4042"/></linearGradient>
<linearGradient id="R102" gradientUnits="userSpaceOnUse" x1="615.1" y1="220.0" x2="660.9" y2="544.8"><stop offset="0" stop-color="#44403d"/><stop offset="0.3" stop-color="#403d3b"/><stop offset="0.55" stop-color="#404040"/><stop offset="0.78" stop-color="#3f4041"/><stop offset="1" stop-color="#3e4042"/></linearGradient>
<linearGradient id="R103" gradientUnits="userSpaceOnUse" x1="617.5" y1="221.0" x2="664.2" y2="544.7"><stop offset="0" stop-color="#43403d"/><stop offset="0.3" stop-color="#3f3c3a"/><stop offset="0.55" stop-color="#403f3f"/><stop offset="0.78" stop-color="#3f4041"/><stop offset="1" stop-color="#3e4041"/></linearGradient>
<linearGradient id="R104" gradientUnits="userSpaceOnUse" x1="620.0" y1="222.1" x2="667.4" y2="544.5"><stop offset="0" stop-color="#433f3c"/><stop offset="0.3" stop-color="#3f3c3a"/><stop offset="0.55" stop-color="#403f3f"/><stop offset="0.78" stop-color="#3f3f40"/><stop offset="1" stop-color="#3e3f41"/></linearGradient>
<linearGradient id="R105" gradientUnits="userSpaceOnUse" x1="622.4" y1="223.5" x2="670.7" y2="544.3"><stop offset="0" stop-color="#423f3c"/><stop offset="0.3" stop-color="#3f3c3a"/><stop offset="0.55" stop-color="#3f3f3e"/><stop offset="0.78" stop-color="#3e3f40"/><stop offset="1" stop-color="#3d3f40"/></linearGradient>
<linearGradient id="R106" gradientUnits="userSpaceOnUse" x1="624.9" y1="225.5" x2="674.0" y2="544.0"><stop offset="0" stop-color="#423f3c"/><stop offset="0.3" stop-color="#3f3c3a"/><stop offset="0.55" stop-color="#3f3e3e"/><stop offset="0.78" stop-color="#3e3f3f"/><stop offset="1" stop-color="#3d3f40"/></linearGradient>
<linearGradient id="R107" gradientUnits="userSpaceOnUse" x1="627.3" y1="227.4" x2="677.2" y2="543.6"><stop offset="0" stop-color="#423e3b"/><stop offset="0.3" stop-color="#3e3b39"/><stop offset="0.55" stop-color="#3e3e3d"/><stop offset="0.78" stop-color="#3e3e3f"/><stop offset="1" stop-color="#3d3e3f"/></linearGradient>
<linearGradient id="R108" gradientUnits="userSpaceOnUse" x1="629.8" y1="229.3" x2="680.5" y2="543.2"><stop offset="0" stop-color="#413e3b"/><stop offset="0.3" stop-color="#3e3b39"/><stop offset="0.55" stop-color="#3e3d3d"/><stop offset="0.78" stop-color="#3d3e3f"/><stop offset="1" stop-color="#3c3e3f"/></linearGradient>
<linearGradient id="R109" gradientUnits="userSpaceOnUse" x1="632.2" y1="231.2" x2="683.7" y2="542.8"><stop offset="0" stop-color="#413d3a"/><stop offset="0.3" stop-color="#3e3b39"/><stop offset="0.55" stop-color="#3e3d3c"/><stop offset="0.78" stop-color="#3d3e3e"/><stop offset="1" stop-color="#3c3e3f"/></linearGradient>
<linearGradient id="R110" gradientUnits="userSpaceOnUse" x1="634.7" y1="233.1" x2="687.0" y2="542.4"><stop offset="0" stop-color="#403d3a"/><stop offset="0.3" stop-color="#3d3a38"/><stop offset="0.55" stop-color="#3d3d3c"/><stop offset="0.78" stop-color="#3d3d3e"/><stop offset="1" stop-color="#3c3d3e"/></linearGradient>
<linearGradient id="R111" gradientUnits="userSpaceOnUse" x1="637.1" y1="235.0" x2="690.3" y2="542.0"><stop offset="0" stop-color="#403d3a"/><stop offset="0.3" stop-color="#3d3a38"/><stop offset="0.55" stop-color="#3d3c3b"/><stop offset="0.78" stop-color="#3d3d3d"/><stop offset="1" stop-color="#3c3d3e"/></linearGradient>
<linearGradient id="R112" gradientUnits="userSpaceOnUse" x1="639.6" y1="236.9" x2="693.5" y2="541.6"><stop offset="0" stop-color="#3f3c39"/><stop offset="0.3" stop-color="#3d3a38"/><stop offset="0.55" stop-color="#3d3c3b"/><stop offset="0.78" stop-color="#3c3d3d"/><stop offset="1" stop-color="#3b3d3d"/></linearGradient>
<linearGradient id="R113" gradientUnits="userSpaceOnUse" x1="642.0" y1="238.9" x2="696.8" y2="541.2"><stop offset="0" stop-color="#3f3c39"/><stop offset="0.3" stop-color="#3d3a38"/><stop offset="0.55" stop-color="#3c3c3a"/><stop offset="0.78" stop-color="#3c3c3d"/><stop offset="1" stop-color="#3b3c3d"/></linearGradient>
<linearGradient id="R114" gradientUnits="userSpaceOnUse" x1="644.5" y1="241.3" x2="700.1" y2="540.7"><stop offset="0" stop-color="#3e3b38"/><stop offset="0.3" stop-color="#3c3937"/><stop offset="0.55" stop-color="#3c3b3a"/><stop offset="0.78" stop-color="#3c3c3c"/><stop offset="1" stop-color="#3b3c3c"/></linearGradient>
<linearGradient id="R115" gradientUnits="userSpaceOnUse" x1="647.0" y1="245.5" x2="703.3" y2="540.3"><stop offset="0" stop-color="#3e3b38"/><stop offset="0.3" stop-color="#3c3937"/><stop offset="0.55" stop-color="#3c3b39"/><stop offset="0.78" stop-color="#3b3c3c"/><stop offset="1" stop-color="#3a3c3c"/></linearGradient>
<linearGradient id="R116" gradientUnits="userSpaceOnUse" x1="649.4" y1="249.7" x2="706.6" y2="539.9"><stop offset="0" stop-color="#3e3b38"/><stop offset="0.3" stop-color="#3c3937"/><stop offset="0.55" stop-color="#3b3a39"/><stop offset="0.78" stop-color="#3b3b3b"/><stop offset="1" stop-color="#3a3b3c"/></linearGradient>
<linearGradient id="R117" gradientUnits="userSpaceOnUse" x1="651.9" y1="253.9" x2="709.8" y2="539.5"><stop offset="0" stop-color="#3d3a37"/><stop offset="0.3" stop-color="#3c3937"/><stop offset="0.55" stop-color="#3b3a38"/><stop offset="0.78" stop-color="#3b3b3b"/><stop offset="1" stop-color="#3a3b3b"/></linearGradient>
<linearGradient id="R118" gradientUnits="userSpaceOnUse" x1="654.3" y1="259.2" x2="713.1" y2="539.1"><stop offset="0" stop-color="#3d3a37"/><stop offset="0.3" stop-color="#3c3937"/><stop offset="0.55" stop-color="#3b3a38"/><stop offset="0.78" stop-color="#3b3b3b"/><stop offset="1" stop-color="#3a3b3b"/></linearGradient>
<linearGradient id="R119" gradientUnits="userSpaceOnUse" x1="656.8" y1="271.7" x2="716.4" y2="537.8"><stop offset="0" stop-color="#3d3a37"/><stop offset="0.3" stop-color="#3b3836"/><stop offset="0.55" stop-color="#3b3a38"/><stop offset="0.78" stop-color="#3a3a3b"/><stop offset="1" stop-color="#393a3b"/></linearGradient>
<linearGradient id="seam" gradientUnits="userSpaceOnUse" x1="0" y1="194" x2="0" y2="550"><stop offset="0" stop-color="#a09c9c"/><stop offset="0.5" stop-color="#9a9aa2"/><stop offset="1" stop-color="#a2aab8"/></linearGradient>
<clipPath id="oc"><polygon points="148.0,535.8 186.5,380.0 202.8,311.0 211.8,270.5 218.8,250.6 236.8,232.9 264.0,217.6 307.0,203.2 362.5,194.2 423.0,187.7 449.0,187.7 454.8,189.0 484.6,188.7 510.0,192.3 541.0,196.4 587.6,208.5 621.2,222.6 643.9,240.3 654.0,257.6 660.5,293.3 686.3,400.4 711.0,510.0 716.4,533.1 717.2,536.3 715.9,538.6 711.7,540.2 694.4,542.4 672.7,544.2 619.7,547.0 600.0,547.8 553.0,549.0 485.0,550.5 400.0,551.2 326.3,549.6 271.0,547.8 202.3,545.7 183.1,543.9 163.8,542.0 149.0,539.7 147.8,538.2 148.0,535.8"/></clipPath>
</defs>
<g clip-path="url(#oc)">
<polygon points="148.0,535.8 186.5,380.0 202.8,311.0 211.8,270.5 218.8,250.6 236.8,232.9 264.0,217.6 307.0,203.2 362.5,194.2 423.0,187.7 449.0,187.7 454.8,189.0 484.6,188.7 510.0,192.3 541.0,196.4 587.6,208.5 621.2,222.6 643.9,240.3 654.0,257.6 660.5,293.3 686.3,400.4 711.0,510.0 716.4,533.1 717.2,536.3 715.9,538.6 711.7,540.2 694.4,542.4 672.7,544.2 619.7,547.0 600.0,547.8 553.0,549.0 485.0,550.5 400.0,551.2 326.3,549.6 271.0,547.8 202.3,545.7 183.1,543.9 163.8,542.0 149.0,539.7 147.8,538.2 148.0,535.8" fill="#3b3a39"/>
<g shape-rendering="crispEdges">
<path d="M364.1,188.1L367.3,187.9L329.9,555.6L325.9,555.6z" fill="url(#R0)"/>
<path d="M366.6,187.9L369.7,187.6L333.1,555.7L329.2,555.6z" fill="url(#R1)"/>
<path d="M369.0,187.6L372.1,187.3L336.4,555.8L332.4,555.7z" fill="url(#R2)"/>
<path d="M371.4,187.3L374.6,187.1L339.7,555.9L335.7,555.8z" fill="url(#R3)"/>
<path d="M373.9,187.1L377.0,186.8L343.0,555.9L339.0,555.9z" fill="url(#R4)"/>
<path d="M376.3,186.8L379.5,186.5L346.2,556.0L342.3,555.9z" fill="url(#R5)"/>
<path d="M378.8,186.5L381.9,186.3L349.5,556.1L345.5,556.0z" fill="url(#R6)"/>
<path d="M381.2,186.3L384.3,186.0L352.8,556.1L348.8,556.1z" fill="url(#R7)"/>
<path d="M383.6,186.0L386.8,185.7L356.1,556.2L352.1,556.1z" fill="url(#R8)"/>
<path d="M386.1,185.7L389.2,185.5L359.3,556.3L355.4,556.2z" fill="url(#R9)"/>
<path d="M388.5,185.5L391.7,185.2L362.6,556.4L358.6,556.3z" fill="url(#R10)"/>
<path d="M391.0,185.2L394.1,184.9L365.9,556.4L361.9,556.4z" fill="url(#R11)"/>
<path d="M393.4,184.9L396.5,184.7L369.2,556.5L365.2,556.4z" fill="url(#R12)"/>
<path d="M395.8,184.7L399.0,184.4L372.4,556.6L368.5,556.5z" fill="url(#R13)"/>
<path d="M398.3,184.4L401.4,184.2L375.7,556.7L371.7,556.6z" fill="url(#R14)"/>
<path d="M400.7,184.2L403.9,183.9L379.0,556.7L375.0,556.7z" fill="url(#R15)"/>
<path d="M403.2,183.9L406.3,183.6L382.3,556.8L378.3,556.7z" fill="url(#R16)"/>
<path d="M405.6,183.6L408.7,183.4L385.6,556.9L381.6,556.8z" fill="url(#R17)"/>
<path d="M408.0,183.4L411.2,183.1L388.8,556.9L384.9,556.9z" fill="url(#R18)"/>
<path d="M410.5,183.1L413.6,182.8L392.1,557.0L388.1,556.9z" fill="url(#R19)"/>
<path d="M412.9,182.8L416.1,182.6L395.4,557.1L391.4,557.0z" fill="url(#R20)"/>
<path d="M415.4,182.6L418.5,182.3L398.7,557.2L394.7,557.1z" fill="url(#R21)"/>
<path d="M417.8,182.3L420.9,182.0L401.9,557.2L398.0,557.2z" fill="url(#R22)"/>
<path d="M420.2,182.0L423.4,181.8L405.2,557.2L401.2,557.2z" fill="url(#R23)"/>
<path d="M422.7,181.8L425.8,181.7L408.5,557.1L404.5,557.2z" fill="url(#R24)"/>
<path d="M425.1,181.7L428.3,181.7L411.8,557.1L407.8,557.1z" fill="url(#R25)"/>
<path d="M427.6,181.7L430.7,181.7L415.0,557.1L411.1,557.1z" fill="url(#R26)"/>
<path d="M430.0,181.7L433.2,181.7L418.3,557.0L414.3,557.1z" fill="url(#R27)"/>
<path d="M432.5,181.7L435.6,181.7L421.6,557.0L417.6,557.0z" fill="url(#R28)"/>
<path d="M434.9,181.7L438.0,181.7L424.9,557.0L420.9,557.0z" fill="url(#R29)"/>
<path d="M437.3,181.7L440.5,181.7L428.1,557.0L424.2,557.0z" fill="url(#R30)"/>
<path d="M439.8,181.7L442.9,181.7L431.4,556.9L427.4,557.0z" fill="url(#R31)"/>
<path d="M442.2,181.7L445.4,181.7L434.7,556.9L430.7,556.9z" fill="url(#R32)"/>
<path d="M444.7,181.7L447.8,181.7L438.0,556.9L434.0,556.9z" fill="url(#R33)"/>
<path d="M447.1,181.7L450.2,181.8L441.2,556.9L437.3,556.9z" fill="url(#R34)"/>
<path d="M449.5,181.8L452.7,182.3L444.5,556.8L440.5,556.9z" fill="url(#R35)"/>
<path d="M452.0,182.3L455.1,182.9L447.8,556.8L443.8,556.8z" fill="url(#R36)"/>
<path d="M454.4,182.9L457.6,183.0L451.1,556.8L447.1,556.8z" fill="url(#R37)"/>
<path d="M456.9,183.0L460.0,183.0L454.3,556.8L450.4,556.8z" fill="url(#R38)"/>
<path d="M459.3,183.0L462.4,182.9L457.6,556.7L453.6,556.8z" fill="url(#R39)"/>
<path d="M461.7,182.9L464.9,182.9L460.9,556.7L456.9,556.7z" fill="url(#R40)"/>
<path d="M464.2,182.9L467.3,182.9L464.2,556.7L460.2,556.7z" fill="url(#R41)"/>
<path d="M466.6,182.9L469.8,182.9L467.5,556.6L463.5,556.7z" fill="url(#R42)"/>
<path d="M469.1,182.9L472.2,182.8L470.7,556.6L466.8,556.6z" fill="url(#R43)"/>
<path d="M471.5,182.8L474.6,182.8L474.0,556.6L470.0,556.6z" fill="url(#R44)"/>
<path d="M473.9,182.8L477.1,182.8L477.3,556.6L473.3,556.6z" fill="url(#R45)"/>
<path d="M476.4,182.8L479.5,182.8L480.6,556.5L476.6,556.6z" fill="url(#R46)"/>
<path d="M478.8,182.8L482.0,182.7L483.8,556.5L479.9,556.5z" fill="url(#R47)"/>
<path d="M481.3,182.7L484.4,182.7L487.1,556.5L483.1,556.5z" fill="url(#R48)"/>
<path d="M483.7,182.7L486.9,182.9L490.4,556.4L486.4,556.5z" fill="url(#R49)"/>
<path d="M486.2,182.9L489.3,183.3L493.7,556.3L489.7,556.4z" fill="url(#R50)"/>
<path d="M488.6,183.3L491.7,183.6L496.9,556.3L493.0,556.3z" fill="url(#R51)"/>
<path d="M491.0,183.6L494.2,184.0L500.2,556.2L496.2,556.3z" fill="url(#R52)"/>
<path d="M493.5,184.0L496.6,184.3L503.5,556.1L499.5,556.2z" fill="url(#R53)"/>
<path d="M495.9,184.3L499.1,184.7L506.8,556.0L502.8,556.1z" fill="url(#R54)"/>
<path d="M498.4,184.7L501.5,185.0L510.0,556.0L506.1,556.0z" fill="url(#R55)"/>
<path d="M500.8,185.0L503.9,185.4L513.3,555.9L509.3,556.0z" fill="url(#R56)"/>
<path d="M503.2,185.4L506.4,185.7L516.6,555.8L512.6,555.9z" fill="url(#R57)"/>
<path d="M505.7,185.7L508.8,186.1L519.9,555.7L515.9,555.8z" fill="url(#R58)"/>
<path d="M508.1,186.1L511.3,186.4L523.1,555.7L519.2,555.7z" fill="url(#R59)"/>
<path d="M510.6,186.4L513.7,186.7L526.4,555.6L522.4,555.7z" fill="url(#R60)"/>
<path d="M513.0,186.7L516.1,187.1L529.7,555.5L525.7,555.6z" fill="url(#R61)"/>
<path d="M515.4,187.1L518.6,187.4L533.0,555.5L529.0,555.5z" fill="url(#R62)"/>
<path d="M517.9,187.4L521.0,187.7L536.2,555.4L532.3,555.5z" fill="url(#R63)"/>
<path d="M520.3,187.7L523.5,188.0L539.5,555.3L535.5,555.4z" fill="url(#R64)"/>
<path d="M522.8,188.0L525.9,188.4L542.8,555.2L538.8,555.3z" fill="url(#R65)"/>
<path d="M525.2,188.4L528.3,188.7L546.1,555.2L542.1,555.2z" fill="url(#R66)"/>
<path d="M527.6,188.7L530.8,189.0L549.4,555.1L545.4,555.2z" fill="url(#R67)"/>
<path d="M530.1,189.0L533.2,189.3L552.6,555.0L548.7,555.1z" fill="url(#R68)"/>
<path d="M532.5,189.3L535.7,189.7L555.9,554.9L551.9,555.0z" fill="url(#R69)"/>
<path d="M535.0,189.7L538.1,190.0L559.2,554.9L555.2,554.9z" fill="url(#R70)"/>
<path d="M537.4,190.0L540.5,190.3L562.5,554.8L558.5,554.9z" fill="url(#R71)"/>
<path d="M539.8,190.3L543.0,190.8L565.7,554.7L561.8,554.8z" fill="url(#R72)"/>
<path d="M542.3,190.8L545.4,191.5L569.0,554.6L565.0,554.7z" fill="url(#R73)"/>
<path d="M544.7,191.5L547.9,192.1L572.3,554.5L568.3,554.6z" fill="url(#R74)"/>
<path d="M547.2,192.1L550.3,192.8L575.6,554.4L571.6,554.5z" fill="url(#R75)"/>
<path d="M549.6,192.8L552.7,193.4L578.8,554.4L574.9,554.4z" fill="url(#R76)"/>
<path d="M552.0,193.4L555.2,194.0L582.1,554.3L578.1,554.4z" fill="url(#R77)"/>
<path d="M554.5,194.0L557.6,194.7L585.4,554.2L581.4,554.3z" fill="url(#R78)"/>
<path d="M556.9,194.7L560.1,195.3L588.7,554.1L584.7,554.2z" fill="url(#R79)"/>
<path d="M559.4,195.3L562.5,195.9L592.0,554.0L588.0,554.1z" fill="url(#R80)"/>
<path d="M561.8,195.9L564.9,196.6L595.2,553.9L591.3,554.0z" fill="url(#R81)"/>
<path d="M564.2,196.6L567.4,197.2L598.5,553.8L594.5,553.9z" fill="url(#R82)"/>
<path d="M566.7,197.2L569.8,197.9L601.8,553.8L597.8,553.8z" fill="url(#R83)"/>
<path d="M569.1,197.9L572.3,198.5L605.1,553.6L601.1,553.8z" fill="url(#R84)"/>
<path d="M571.6,198.5L574.7,199.1L608.3,553.5L604.4,553.6z" fill="url(#R85)"/>
<path d="M574.0,199.1L577.1,199.8L611.6,553.4L607.6,553.5z" fill="url(#R86)"/>
<path d="M576.4,199.8L579.6,200.4L614.9,553.2L610.9,553.4z" fill="url(#R87)"/>
<path d="M578.9,200.4L582.0,201.1L618.2,553.1L614.2,553.2z" fill="url(#R88)"/>
<path d="M581.3,201.1L584.4,201.7L621.5,552.9L617.5,553.1z" fill="url(#R89)"/>
<path d="M583.7,201.7L586.9,202.3L624.7,552.8L620.8,552.9z" fill="url(#R90)"/>
<path d="M586.2,202.3L589.3,203.2L628.0,552.6L624.0,552.8z" fill="url(#R91)"/>
<path d="M588.6,203.2L591.8,204.3L631.3,552.4L627.3,552.6z" fill="url(#R92)"/>
<path d="M591.1,204.3L594.2,205.3L634.6,552.2L630.6,552.4z" fill="url(#R93)"/>
<path d="M593.5,205.3L596.6,206.3L637.8,552.1L633.9,552.2z" fill="url(#R94)"/>
<path d="M595.9,206.3L599.1,207.4L641.1,551.9L637.1,552.1z" fill="url(#R95)"/>
<path d="M598.4,207.4L601.5,208.4L644.4,551.7L640.4,551.9z" fill="url(#R96)"/>
<path d="M600.8,208.4L603.9,209.4L647.7,551.6L643.7,551.7z" fill="url(#R97)"/>
<path d="M603.2,209.4L606.4,210.5L651.0,551.4L647.0,551.6z" fill="url(#R98)"/>
<path d="M605.7,210.5L608.8,211.5L654.2,551.2L650.3,551.4z" fill="url(#R99)"/>
<path d="M608.1,211.5L611.3,212.5L657.5,551.0L653.5,551.2z" fill="url(#R100)"/>
<path d="M610.6,212.5L613.7,213.6L660.8,550.9L656.8,551.0z" fill="url(#R101)"/>
<path d="M613.0,213.6L616.1,214.6L664.1,550.7L660.1,550.9z" fill="url(#R102)"/>
<path d="M615.4,214.6L618.6,215.6L667.4,550.5L663.4,550.7z" fill="url(#R103)"/>
<path d="M617.9,215.6L621.0,216.7L670.6,550.3L666.7,550.5z" fill="url(#R104)"/>
<path d="M620.3,216.7L623.4,218.6L673.9,550.2L669.9,550.3z" fill="url(#R105)"/>
<path d="M622.7,218.6L625.9,220.5L677.2,549.8L673.2,550.2z" fill="url(#R106)"/>
<path d="M625.2,220.5L628.3,222.4L680.5,549.3L676.5,549.8z" fill="url(#R107)"/>
<path d="M627.6,222.4L630.7,224.3L683.8,548.9L679.8,549.3z" fill="url(#R108)"/>
<path d="M630.0,224.3L633.2,226.2L687.1,548.5L683.1,548.9z" fill="url(#R109)"/>
<path d="M632.5,226.2L635.6,228.2L690.3,548.1L686.4,548.5z" fill="url(#R110)"/>
<path d="M634.9,228.2L638.0,230.1L693.6,547.7L689.6,548.1z" fill="url(#R111)"/>
<path d="M637.3,230.1L640.5,232.0L696.9,547.3L692.9,547.7z" fill="url(#R112)"/>
<path d="M639.8,232.0L642.9,233.9L700.2,546.8L696.2,547.3z" fill="url(#R113)"/>
<path d="M642.2,233.9L645.3,237.5L703.5,546.4L699.5,546.8z" fill="url(#R114)"/>
<path d="M644.6,237.5L647.7,241.7L706.8,546.0L702.8,546.4z" fill="url(#R115)"/>
<path d="M647.0,241.7L650.2,246.0L710.1,545.6L706.1,546.0z" fill="url(#R116)"/>
<path d="M649.5,246.0L652.6,250.2L713.4,545.2L709.4,545.6z" fill="url(#R117)"/>
<path d="M651.9,250.2L655.0,259.6L716.7,544.7L712.7,545.2z" fill="url(#R118)"/>
<path d="M654.3,259.6L669.3,272.2L732.1,541.8L716.0,544.7z" fill="url(#R119)"/>
<path d="M214.4,244.6L222.7,243.0L148.8,545.2L140.1,544.8z" fill="url(#L0)"/>
<path d="M222.0,243.0L224.3,241.4L150.8,545.6L148.1,545.2z" fill="url(#L1)"/>
<path d="M223.6,241.4L225.9,239.8L152.8,545.9L150.1,545.6z" fill="url(#L2)"/>
<path d="M225.2,239.8L227.5,238.2L154.8,546.3L152.1,545.9z" fill="url(#L3)"/>
<path d="M226.8,238.2L229.1,236.7L156.8,546.7L154.1,546.3z" fill="url(#L4)"/>
<path d="M228.4,236.7L230.7,235.1L158.8,547.0L156.1,546.7z" fill="url(#L5)"/>
<path d="M230.0,235.1L232.3,233.5L160.8,547.4L158.1,547.0z" fill="url(#L6)"/>
<path d="M231.6,233.5L233.9,231.9L162.8,547.8L160.1,547.4z" fill="url(#L7)"/>
<path d="M233.2,231.9L235.5,230.3L164.8,548.0L162.1,547.8z" fill="url(#L8)"/>
<path d="M234.8,230.3L237.0,228.8L166.8,548.2L164.1,548.0z" fill="url(#L9)"/>
<path d="M236.3,228.8L238.6,227.2L168.8,548.4L166.1,548.2z" fill="url(#L10)"/>
<path d="M237.9,227.2L240.2,226.2L170.8,548.6L168.1,548.4z" fill="url(#L11)"/>
<path d="M239.5,226.2L241.8,225.3L172.8,548.8L170.1,548.6z" fill="url(#L12)"/>
<path d="M241.1,225.3L243.4,224.4L174.8,549.0L172.1,548.8z" fill="url(#L13)"/>
<path d="M242.7,224.4L245.0,223.5L176.8,549.2L174.1,549.0z" fill="url(#L14)"/>
<path d="M244.3,223.5L246.6,222.6L178.8,549.4L176.1,549.2z" fill="url(#L15)"/>
<path d="M245.9,222.6L248.2,221.7L180.8,549.6L178.1,549.4z" fill="url(#L16)"/>
<path d="M247.5,221.7L249.8,220.8L182.8,549.8L180.1,549.6z" fill="url(#L17)"/>
<path d="M249.1,220.8L251.4,219.9L184.8,550.0L182.1,549.8z" fill="url(#L18)"/>
<path d="M250.7,219.9L253.0,219.0L186.8,550.2L184.1,550.0z" fill="url(#L19)"/>
<path d="M252.3,219.0L254.6,218.1L188.8,550.4L186.1,550.2z" fill="url(#L20)"/>
<path d="M253.9,218.1L256.2,217.2L190.8,550.6L188.1,550.4z" fill="url(#L21)"/>
<path d="M255.5,217.2L257.8,216.3L192.8,550.7L190.1,550.6z" fill="url(#L22)"/>
<path d="M257.1,216.3L259.4,215.3L194.8,550.9L192.1,550.7z" fill="url(#L23)"/>
<path d="M258.7,215.3L261.0,214.4L196.8,551.1L194.1,550.9z" fill="url(#L24)"/>
<path d="M260.3,214.4L262.6,213.5L198.8,551.3L196.1,551.1z" fill="url(#L25)"/>
<path d="M261.9,213.5L264.2,212.6L200.8,551.5L198.1,551.3z" fill="url(#L26)"/>
<path d="M263.5,212.6L265.7,211.7L202.8,551.6L200.1,551.5z" fill="url(#L27)"/>
<path d="M265.0,211.7L267.3,211.2L204.8,551.7L202.1,551.6z" fill="url(#L28)"/>
<path d="M266.6,211.2L268.9,210.6L206.8,551.8L204.1,551.7z" fill="url(#L29)"/>
<path d="M268.2,210.6L270.5,210.1L208.8,551.8L206.1,551.8z" fill="url(#L30)"/>
<path d="M269.8,210.1L272.1,209.6L210.8,551.9L208.1,551.8z" fill="url(#L31)"/>
<path d="M271.4,209.6L273.7,209.0L212.8,551.9L210.1,551.9z" fill="url(#L32)"/>
<path d="M273.0,209.0L275.3,208.5L214.8,552.0L212.1,551.9z" fill="url(#L33)"/>
<path d="M274.6,208.5L276.9,207.9L216.8,552.1L214.1,552.0z" fill="url(#L34)"/>
<path d="M276.2,207.9L278.5,207.4L218.8,552.1L216.1,552.1z" fill="url(#L35)"/>
<path d="M277.8,207.4L280.1,206.9L220.8,552.2L218.1,552.1z" fill="url(#L36)"/>
<path d="M279.4,206.9L281.7,206.3L222.8,552.2L220.1,552.2z" fill="url(#L37)"/>
<path d="M281.0,206.3L283.3,205.8L224.8,552.3L222.1,552.2z" fill="url(#L38)"/>
<path d="M282.6,205.8L284.9,205.2L226.8,552.4L224.1,552.3z" fill="url(#L39)"/>
<path d="M284.2,205.2L286.5,204.7L228.8,552.4L226.1,552.4z" fill="url(#L40)"/>
<path d="M285.8,204.7L288.1,204.2L230.8,552.5L228.1,552.4z" fill="url(#L41)"/>
<path d="M287.4,204.2L289.7,203.6L232.8,552.6L230.1,552.5z" fill="url(#L42)"/>
<path d="M289.0,203.6L291.3,203.1L234.8,552.6L232.1,552.6z" fill="url(#L43)"/>
<path d="M290.6,203.1L292.9,202.6L236.7,552.7L234.1,552.6z" fill="url(#L44)"/>
<path d="M292.2,202.6L294.5,202.0L238.7,552.7L236.0,552.7z" fill="url(#L45)"/>
<path d="M293.8,202.0L296.1,201.5L240.7,552.8L238.0,552.7z" fill="url(#L46)"/>
<path d="M295.4,201.5L297.7,200.9L242.7,552.9L240.0,552.8z" fill="url(#L47)"/>
<path d="M297.0,200.9L299.3,200.4L244.7,552.9L242.0,552.9z" fill="url(#L48)"/>
<path d="M298.6,200.4L300.9,199.9L246.7,553.0L244.0,552.9z" fill="url(#L49)"/>
<path d="M300.2,199.9L302.5,199.3L248.7,553.1L246.0,553.0z" fill="url(#L50)"/>
<path d="M301.8,199.3L304.1,198.8L250.7,553.1L248.0,553.1z" fill="url(#L51)"/>
<path d="M303.4,198.8L305.7,198.2L252.7,553.2L250.0,553.1z" fill="url(#L52)"/>
<path d="M305.0,198.2L307.3,197.7L254.7,553.2L252.0,553.2z" fill="url(#L53)"/>
<path d="M306.6,197.7L308.9,197.2L256.7,553.3L254.0,553.2z" fill="url(#L54)"/>
<path d="M308.2,197.2L310.5,197.0L258.7,553.4L256.0,553.3z" fill="url(#L55)"/>
<path d="M309.8,197.0L312.1,196.7L260.7,553.4L258.0,553.4z" fill="url(#L56)"/>
<path d="M311.4,196.7L313.7,196.4L262.7,553.5L260.0,553.4z" fill="url(#L57)"/>
<path d="M313.0,196.4L315.3,196.2L264.7,553.6L262.0,553.5z" fill="url(#L58)"/>
<path d="M314.6,196.2L316.9,195.9L266.7,553.6L264.0,553.6z" fill="url(#L59)"/>
<path d="M316.2,195.9L318.5,195.7L268.7,553.7L266.0,553.6z" fill="url(#L60)"/>
<path d="M317.8,195.7L320.1,195.4L270.7,553.7L268.0,553.7z" fill="url(#L61)"/>
<path d="M319.4,195.4L321.7,195.1L272.7,553.8L270.0,553.7z" fill="url(#L62)"/>
<path d="M321.0,195.1L323.3,194.9L274.7,553.9L272.0,553.8z" fill="url(#L63)"/>
<path d="M322.6,194.9L324.9,194.6L276.7,553.9L274.0,553.9z" fill="url(#L64)"/>
<path d="M324.2,194.6L326.5,194.4L278.7,554.0L276.0,553.9z" fill="url(#L65)"/>
<path d="M325.8,194.4L328.1,194.1L280.7,554.1L278.0,554.0z" fill="url(#L66)"/>
<path d="M327.4,194.1L329.7,193.8L282.7,554.1L280.0,554.1z" fill="url(#L67)"/>
<path d="M329.0,193.8L331.3,193.6L284.7,554.2L282.0,554.1z" fill="url(#L68)"/>
<path d="M330.6,193.6L332.9,193.3L286.7,554.3L284.0,554.2z" fill="url(#L69)"/>
<path d="M332.2,193.3L334.4,193.1L288.7,554.3L286.0,554.3z" fill="url(#L70)"/>
<path d="M333.7,193.1L336.0,192.8L290.7,554.4L288.0,554.3z" fill="url(#L71)"/>
<path d="M335.3,192.8L337.6,192.5L292.6,554.5L290.0,554.4z" fill="url(#L72)"/>
<path d="M336.9,192.5L339.2,192.3L294.6,554.5L291.9,554.5z" fill="url(#L73)"/>
<path d="M338.5,192.3L340.8,192.0L296.6,554.6L293.9,554.5z" fill="url(#L74)"/>
<path d="M340.1,192.0L342.4,191.8L298.6,554.7L295.9,554.6z" fill="url(#L75)"/>
<path d="M341.7,191.8L344.0,191.5L300.6,554.7L297.9,554.7z" fill="url(#L76)"/>
<path d="M343.3,191.5L345.6,191.2L302.6,554.8L299.9,554.7z" fill="url(#L77)"/>
<path d="M344.9,191.2L347.2,191.0L304.6,554.8L301.9,554.8z" fill="url(#L78)"/>
<path d="M346.5,191.0L348.8,190.7L306.6,554.9L303.9,554.8z" fill="url(#L79)"/>
<path d="M348.1,190.7L350.4,190.5L308.6,555.0L305.9,554.9z" fill="url(#L80)"/>
<path d="M349.7,190.5L352.0,190.2L310.6,555.0L307.9,555.0z" fill="url(#L81)"/>
<path d="M351.3,190.2L353.6,189.9L312.6,555.1L309.9,555.0z" fill="url(#L82)"/>
<path d="M352.9,189.9L355.2,189.7L314.6,555.2L311.9,555.1z" fill="url(#L83)"/>
<path d="M354.5,189.7L356.8,189.4L316.6,555.2L313.9,555.2z" fill="url(#L84)"/>
<path d="M356.1,189.4L358.4,189.2L318.6,555.3L315.9,555.2z" fill="url(#L85)"/>
<path d="M357.7,189.2L360.0,188.9L320.6,555.4L317.9,555.3z" fill="url(#L86)"/>
<path d="M359.3,188.9L361.6,188.7L322.6,555.4L319.9,555.4z" fill="url(#L87)"/>
<path d="M360.9,188.7L363.2,188.4L324.6,555.5L321.9,555.4z" fill="url(#L88)"/>
<path d="M362.5,188.4L364.8,188.1L326.6,555.6L323.9,555.5z" fill="url(#L89)"/>
</g>
<path d="M363.5,194.1 L326.5,549.6" stroke="url(#seam)" stroke-width="1.5" stroke-opacity="0.62"/>
</g>
<polygon points="148.0,535.8 186.5,380.0 202.8,311.0 211.8,270.5 218.8,250.6 236.8,232.9 264.0,217.6 307.0,203.2 362.5,194.2 423.0,187.7 449.0,187.7 454.8,189.0 484.6,188.7 510.0,192.3 541.0,196.4 587.6,208.5 621.2,222.6 643.9,240.3 654.0,257.6 660.5,293.3 686.3,400.4 711.0,510.0 716.4,533.1 717.2,536.3 715.9,538.6 711.7,540.2 694.4,542.4 672.7,544.2 619.7,547.0 600.0,547.8 553.0,549.0 485.0,550.5 400.0,551.2 326.3,549.6 271.0,547.8 202.3,545.7 183.1,543.9 163.8,542.0 149.0,539.7 147.8,538.2 148.0,535.8" fill="none" stroke="#f59a2c" stroke-width="1.85" stroke-linejoin="round"/>
</svg>
<div id="ui" style="position:absolute;left:0;top:0;width:849px;height:624px;will-change:transform">
<div class="abs" id="ov1" style="right:841.7px;top:20.2px;font-family:'DejaVu Sans','Liberation Sans',sans-serif;font-size:11px;line-height:12px;color:#fff;letter-spacing:0;white-space:nowrap;-webkit-text-stroke:0.55px #fff;text-shadow:0 0 1px rgba(0,0,0,.9),0 1px 2px rgba(0,0,0,.8)">User Perspective (Local)</div>
<div class="abs" id="ov2" style="right:820.7px;top:37.9px;font-family:'DejaVu Sans','Liberation Sans',sans-serif;font-size:11px;line-height:12px;color:#fff;letter-spacing:0;white-space:nowrap;-webkit-text-stroke:0.55px #fff;text-shadow:0 0 1px rgba(0,0,0,.9),0 1px 2px rgba(0,0,0,.8)">(1) Collection | Cylinder.002</div>
<div class="abs" style="left:791.4px;top:-10px;width:70px;height:18.7px;background:#3a3a3a;border-radius:4px"></div>
<div class="abs" style="left:800px;top:-14px;width:60px;height:18.9px;background:#2b2b2b;border-radius:3px;overflow:hidden"><span class="abs" style="left:6px;top:4.2px;line-height:12px;color:#e6e6e6">Options</span></div>
<div class="abs" id="panel"></div>
<svg class="abs" style="left:668px;top:20px" width="12" height="10"><path d="M1.6,2.5 L5.6,7 L9.6,2.5" fill="none" stroke="#a8a8a8" stroke-width="1.15" stroke-linecap="round" stroke-linejoin="round"/></svg>
<div class="lbl" style="left:683.5px;top:17.8px;letter-spacing:0.42px;color:#f0f0f0;-webkit-text-stroke:0.1px #f0f0f0;text-shadow:0 1px 1px rgba(0,0,0,.55)">Transform</div>
<svg class="abs" style="left:0;top:0" width="849" height="40"><rect x="827" y="21" width="1" height="1" fill="#bdbdbd"/><rect x="827" y="22" width="1" height="1" fill="#0a0a0a"/><rect x="827" y="24" width="1" height="1" fill="#bdbdbd"/><rect x="827" y="25" width="1" height="1" fill="#0a0a0a"/><rect x="830" y="21" width="1" height="1" fill="#bdbdbd"/><rect x="830" y="22" width="1" height="1" fill="#0a0a0a"/><rect x="830" y="24" width="1" height="1" fill="#bdbdbd"/><rect x="830" y="25" width="1" height="1" fill="#0a0a0a"/><rect x="833" y="21" width="1" height="1" fill="#bdbdbd"/><rect x="833" y="22" width="1" height="1" fill="#0a0a0a"/><rect x="833" y="24" width="1" height="1" fill="#bdbdbd"/><rect x="833" y="25" width="1" height="1" fill="#0a0a0a"/><rect x="836" y="21" width="1" height="1" fill="#bdbdbd"/><rect x="836" y="22" width="1" height="1" fill="#0a0a0a"/><rect x="836" y="24" width="1" height="1" fill="#bdbdbd"/><rect x="836" y="25" width="1" height="1" fill="#0a0a0a"/></svg>
<div class="lbl" style="left:670.5px;top:47.7px">Location:</div>
<div class="fld" style="top:65.0px;width:125px;height:18.3px;border-radius:4px 4px 0 0"></div>
<div class="lbl" style="left:685.1px;top:68.2px;text-shadow:0 1px 1px rgba(0,0,0,.3)">X</div>
<div class="lbl" style="right:66.8px;top:68.2px;letter-spacing:0.45px">0 m</div>
<svg class="abs" style="left:805px;top:60.00px" width="30" height="24" viewBox="805 60 30 24"><path d="M813.6,71.8 A3.05,3.2 0 0 1 819.65,71.2 L819.65,73.3" fill="none" stroke="#b4b4b4" stroke-width="1.15" stroke-linecap="round"/><rect x="818.45" y="73.45" width="8.1" height="5" fill="#303030" stroke="#b4b4b4" stroke-width="1.1"/><rect x="821.95" y="74.9" width="1.1" height="2.1" fill="#cfcfcf"/></svg>
<div class="fld" style="top:84.3px;width:125px;height:18.9px;border-radius:0"></div>
<div class="lbl" style="left:685.1px;top:87.1px;text-shadow:0 1px 1px rgba(0,0,0,.3)">Y</div>
<div class="lbl" style="right:66.8px;top:87.1px;letter-spacing:0.45px">0 m</div>
<svg class="abs" style="left:805px;top:78.90px" width="30" height="24" viewBox="805 60 30 24"><path d="M813.6,71.8 A3.05,3.2 0 0 1 819.65,71.2 L819.65,73.3" fill="none" stroke="#b4b4b4" stroke-width="1.15" stroke-linecap="round"/><rect x="818.45" y="73.45" width="8.1" height="5" fill="#303030" stroke="#b4b4b4" stroke-width="1.1"/><rect x="821.95" y="74.9" width="1.1" height="2.1" fill="#cfcfcf"/></svg>
<div class="fld" style="top:104.1px;width:125px;height:19.2px;border-radius:0 0 4px 4px"></div>
<div class="lbl" style="left:685.1px;top:106.9px;text-shadow:0 1px 1px rgba(0,0,0,.3)">Z</div>
<div class="lbl" style="right:66.8px;top:106.9px;letter-spacing:0.45px">0 m</div>
<svg class="abs" style="left:805px;top:98.65px" width="30" height="24" viewBox="805 60 30 24"><path d="M813.6,71.8 A3.05,3.2 0 0 1 819.65,71.2 L819.65,73.3" fill="none" stroke="#b4b4b4" stroke-width="1.15" stroke-linecap="round"/><rect x="818.45" y="73.45" width="8.1" height="5" fill="#303030" stroke="#b4b4b4" stroke-width="1.1"/><rect x="821.95" y="74.9" width="1.1" height="2.1" fill="#cfcfcf"/></svg>
<div class="lbl" style="left:670.5px;top:129.8px">Rotation:</div>
<div class="fld" style="top:147.0px;width:125px;height:18.3px;border-radius:4px 4px 0 0"></div>
<div class="lbl" style="left:685.1px;top:150.2px;text-shadow:0 1px 1px rgba(0,0,0,.3)">X</div>
<div class="lbl" style="right:66.8px;top:150.2px;letter-spacing:0.45px">0°</div>
<svg class="abs" style="left:805px;top:142.00px" width="30" height="24" viewBox="805 60 30 24"><path d="M813.6,71.8 A3.05,3.2 0 0 1 819.65,71.2 L819.65,73.3" fill="none" stroke="#b4b4b4" stroke-width="1.15" stroke-linecap="round"/><rect x="818.45" y="73.45" width="8.1" height="5" fill="#303030" stroke="#b4b4b4" stroke-width="1.1"/><rect x="821.95" y="74.9" width="1.1" height="2.1" fill="#cfcfcf"/></svg>
<div class="fld" style="top:166.3px;width:125px;height:18.9px;border-radius:0"></div>
<div class="lbl" style="left:685.1px;top:169.2px;text-shadow:0 1px 1px rgba(0,0,0,.3)">Y</div>
<div class="lbl" style="right:66.8px;top:169.2px;letter-spacing:0.45px">0°</div>
<svg class="abs" style="left:805px;top:160.90px" width="30" height="24" viewBox="805 60 30 24"><path d="M813.6,71.8 A3.05,3.2 0 0 1 819.65,71.2 L819.65,73.3" fill="none" stroke="#b4b4b4" stroke-width="1.15" stroke-linecap="round"/><rect x="818.45" y="73.45" width="8.1" height="5" fill="#303030" stroke="#b4b4b4" stroke-width="1.1"/><rect x="821.95" y="74.9" width="1.1" height="2.1" fill="#cfcfcf"/></svg>
<div class="fld" style="top:186.1px;width:125px;height:19.2px;border-radius:0 0 4px 4px"></div>
<div class="lbl" style="left:685.1px;top:188.9px;text-shadow:0 1px 1px rgba(0,0,0,.3)">Z</div>
<div class="lbl" style="right:66.8px;top:188.9px;letter-spacing:0.45px">0°</div>
<svg class="abs" style="left:805px;top:180.65px" width="30" height="24" viewBox="805 60 30 24"><path d="M813.6,71.8 A3.05,3.2 0 0 1 819.65,71.2 L819.65,73.3" fill="none" stroke="#b4b4b4" stroke-width="1.15" stroke-linecap="round"/><rect x="818.45" y="73.45" width="8.1" height="5" fill="#303030" stroke="#b4b4b4" stroke-width="1.1"/><rect x="821.95" y="74.9" width="1.1" height="2.1" fill="#cfcfcf"/></svg>
<div class="abs" style="left:670px;top:209.2px;width:164.8px;height:17.6px;background:#282828;border-radius:4px"></div>
<div class="lbl" style="left:677.3px;top:212.1px;color:#dcdcdc;letter-spacing:0">XYZ Euler</div>
<svg class="abs" style="left:824px;top:214px" width="11" height="9"><path d="M2.2,3.4 L5.3,6.5 L8.4,3.4" fill="none" stroke="#dcdcdc" stroke-width="1.2" stroke-linecap="round" stroke-linejoin="round"/></svg>
<div class="lbl" style="left:670.5px;top:234.1px">Scale:</div>
<div class="fld" style="top:251.2px;width:125px;height:18.3px;border-radius:4px 4px 0 0"></div>
<div class="lbl" style="left:685.1px;top:254.4px;text-shadow:0 1px 1px rgba(0,0,0,.3)">X</div>
<div class="lbl" style="right:66.8px;top:254.4px;letter-spacing:0.45px">1.000</div>
<svg class="abs" style="left:805px;top:246.20px" width="30" height="24" viewBox="805 60 30 24"><path d="M813.6,71.8 A3.05,3.2 0 0 1 819.65,71.2 L819.65,73.3" fill="none" stroke="#b4b4b4" stroke-width="1.15" stroke-linecap="round"/><rect x="818.45" y="73.45" width="8.1" height="5" fill="#303030" stroke="#b4b4b4" stroke-width="1.1"/><rect x="821.95" y="74.9" width="1.1" height="2.1" fill="#cfcfcf"/></svg>
<div class="fld" style="top:270.5px;width:125px;height:18.9px;border-radius:0"></div>
<div class="lbl" style="left:685.1px;top:273.4px;text-shadow:0 1px 1px rgba(0,0,0,.3)">Y</div>
<div class="lbl" style="right:66.8px;top:273.4px;letter-spacing:0.45px">1.000</div>
<svg class="abs" style="left:805px;top:265.10px" width="30" height="24" viewBox="805 60 30 24"><path d="M813.6,71.8 A3.05,3.2 0 0 1 819.65,71.2 L819.65,73.3" fill="none" stroke="#b4b4b4" stroke-width="1.15" stroke-linecap="round"/><rect x="818.45" y="73.45" width="8.1" height="5" fill="#303030" stroke="#b4b4b4" stroke-width="1.1"/><rect x="821.95" y="74.9" width="1.1" height="2.1" fill="#cfcfcf"/></svg>
<div class="fld" style="top:290.3px;width:125px;height:19.2px;border-radius:0 0 4px 4px"></div>
<div class="lbl" style="left:685.1px;top:293.1px;text-shadow:0 1px 1px rgba(0,0,0,.3)">Z</div>
<div class="lbl" style="right:66.8px;top:293.1px;letter-spacing:0.45px">1.000</div>
<svg class="abs" style="left:805px;top:284.85px" width="30" height="24" viewBox="805 60 30 24"><path d="M813.6,71.8 A3.05,3.2 0 0 1 819.65,71.2 L819.65,73.3" fill="none" stroke="#b4b4b4" stroke-width="1.15" stroke-linecap="round"/><rect x="818.45" y="73.45" width="8.1" height="5" fill="#303030" stroke="#b4b4b4" stroke-width="1.1"/><rect x="821.95" y="74.9" width="1.1" height="2.1" fill="#cfcfcf"/></svg>
<div class="lbl" style="left:670.5px;top:315.5px">Dimensions:</div>
<div class="fld" style="top:332.8px;width:164.8px;height:18.2px;border-radius:4px 4px 0 0"></div>
<div class="lbl" style="left:685.1px;top:336.3px;text-shadow:0 1px 1px rgba(0,0,0,.3)">X</div>
<div class="lbl" style="right:27.0px;top:336.3px;letter-spacing:0.45px">0.669 m</div>
<div class="fld" style="top:352.0px;width:164.8px;height:19px;border-radius:0"></div>
<div class="lbl" style="left:685.1px;top:355.1px;text-shadow:0 1px 1px rgba(0,0,0,.3)">Y</div>
<div class="lbl" style="right:27.0px;top:355.1px;letter-spacing:0.45px">0.832 m</div>
<div class="fld" style="top:372.0px;width:164.8px;height:19.3px;border-radius:0 0 4px 4px"></div>
<div class="lbl" style="left:685.1px;top:375.4px;text-shadow:0 1px 1px rgba(0,0,0,.3)">Z</div>
<div class="lbl" style="right:27.0px;top:375.4px;letter-spacing:0.45px">0.417 m</div>
</div>
</body></html>
